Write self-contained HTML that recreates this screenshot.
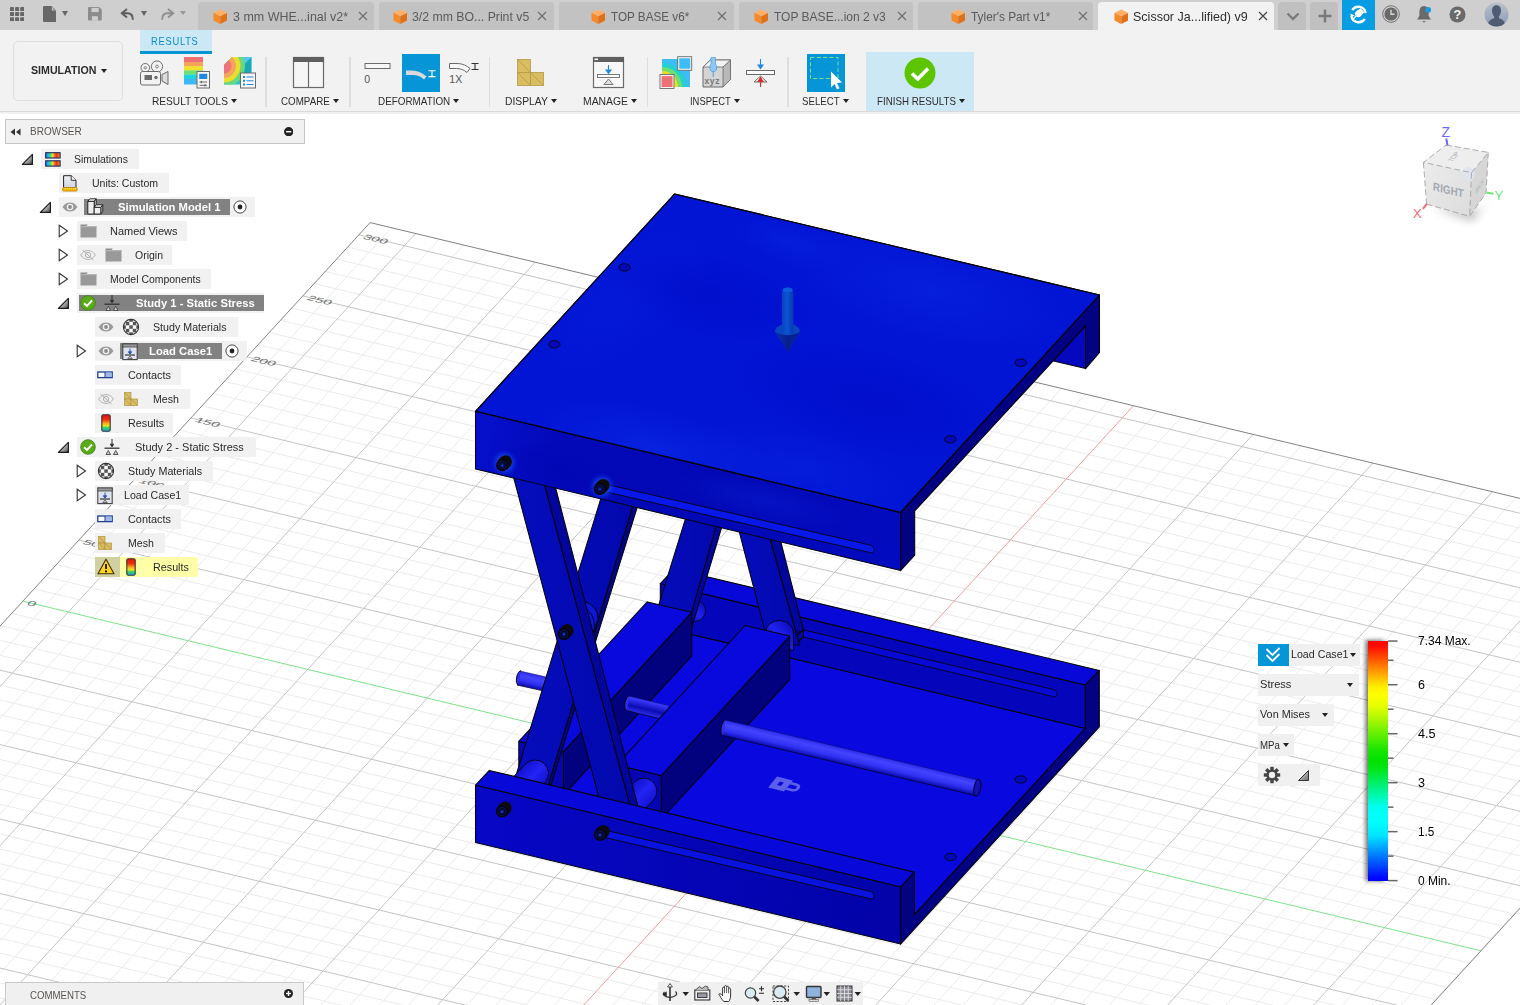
<!DOCTYPE html>
<html><head><meta charset="utf-8"><title>Simulation</title><style>
*{box-sizing:border-box}
html,body{margin:0;padding:0}
body{width:1520px;height:1005px;overflow:hidden;background:#fff;font-family:"Liberation Sans",sans-serif;position:relative}
.abs{position:absolute}
#tabbar{position:absolute;left:0;top:0;width:1520px;height:30px;background:#cfcfcf}
#toolbar{position:absolute;left:0;top:30px;width:1520px;height:81px;background:#f2f2f2}
.tab{position:absolute;top:2px;height:28px;border-radius:4px 4px 0 0}
.tabtxt{font-size:13px;white-space:nowrap;letter-spacing:-0.1px}
.arr{width:0;height:0;border-left:4px solid transparent;border-right:4px solid transparent;border-top:5px solid #444}
.tlab{text-align:center;font-size:11.5px;color:#2c2c2c;white-space:nowrap;letter-spacing:-0.1px}
.tarr{display:inline-block;width:0;height:0;border-left:3.5px solid transparent;border-right:3.5px solid transparent;border-top:4.5px solid #222;margin-left:4px;vertical-align:2px}
.rtxt{font-size:11.3px;color:#2a2a2a;white-space:nowrap;line-height:16px}
.rtxt.b{font-weight:bold;color:#fff}
.lg{background:#f0f0f0;font-size:11.3px;color:#2a2a2a;white-space:nowrap}
</style></head><body>
<div id="tabbar"></div><div id="toolbar"></div>
<div class="abs" style="left:0;top:111px;width:1520px;height:1px;background:#dadada"></div>
<div class="abs" style="left:0;top:112px;width:1520px;height:2px;background:#f0f0f0"></div>
<svg class="abs" style="left:0;top:113px" width="1520" height="892" viewBox="0 113 1520 892">
<path d="M347.7 247.0L1805.8 596.8M336.5 259.2L1794.6 609.0M325.3 271.4L1783.4 621.2M314.1 283.6L1772.2 633.4M291.7 308.1L1749.8 657.8M280.5 320.3L1738.6 670.0M269.3 332.5L1727.4 682.2M258.1 344.7L1716.2 694.4M235.7 369.1L1693.8 718.9M224.5 381.3L1682.6 731.1M213.3 393.5L1671.4 743.3M202.1 405.8L1660.2 755.5M179.7 430.2L1637.8 779.9M168.5 442.4L1626.6 792.1M157.3 454.6L1615.4 804.3M146.1 466.8L1604.2 816.5M123.7 491.2L1581.8 841.0M112.5 503.4L1570.6 853.2M101.3 515.6L1559.4 865.4M90.1 527.9L1548.2 877.6M67.7 552.3L1525.8 902.0M56.5 564.5L1514.6 914.2M45.3 576.7L1503.4 926.4M34.1 588.9L1492.2 938.6M11.7 613.3L1469.8 963.1M0.5 625.5L1458.6 975.3M-10.7 637.7L1447.4 987.5M-21.9 650.0L1436.2 999.7M-44.3 674.4L1413.8 1024.1M-55.5 686.6L1402.6 1036.3M-66.7 698.8L1391.4 1048.5M-77.9 711.0L1380.2 1060.7M-100.3 735.4L1357.8 1085.2M-111.5 747.6L1346.6 1097.4M-122.7 759.8L1335.4 1109.6M-133.9 772.1L1324.2 1121.8M-156.3 796.5L1301.8 1146.2M-167.5 808.7L1290.6 1158.4M-178.7 820.9L1279.4 1170.6M-189.9 833.1L1268.2 1182.8M-212.3 857.5L1245.8 1207.3M-223.5 869.7L1234.6 1219.5M-234.7 881.9L1223.4 1231.7M-245.9 894.2L1212.2 1243.9M-268.3 918.6L1189.8 1268.3M-279.5 930.8L1178.6 1280.5M-290.7 943.0L1167.4 1292.7M-301.9 955.2L1156.2 1304.9M-324.3 979.6L1133.8 1329.4M-335.5 991.8L1122.6 1341.6M-346.7 1004.0L1111.4 1353.8M-357.9 1016.3L1100.2 1366.0M-380.3 1040.7L1077.8 1390.4M-391.5 1052.9L1066.6 1402.6M-402.7 1065.1L1055.4 1414.8M-413.9 1077.3L1044.2 1427.0M-436.3 1101.7L1021.8 1451.5M-447.5 1113.9L1010.6 1463.7M-458.7 1126.1L999.4 1475.9M-469.9 1138.4L988.2 1488.1M-492.3 1162.8L965.8 1512.5M-503.5 1175.0L954.6 1524.7M-514.7 1187.2L943.4 1536.9M-525.9 1199.4L932.2 1549.1M-548.3 1223.8L909.8 1573.6M-559.5 1236.0L898.6 1585.8M-570.7 1248.2L887.4 1598.0M-581.9 1260.5L876.2 1610.2M-604.3 1284.9L853.8 1634.6M-615.5 1297.1L842.6 1646.8M-626.7 1309.3L831.4 1659.0M391.6 227.8L-616.4 1326.7M439.5 239.2L-568.5 1338.1M463.4 245.0L-544.6 1343.9M487.4 250.7L-520.6 1349.6M511.3 256.5L-496.7 1355.4M559.1 267.9L-448.9 1366.8M583.1 273.7L-424.9 1372.6M607.0 279.4L-401.0 1378.3M630.9 285.2L-377.1 1384.1M678.8 296.6L-329.2 1395.5M702.7 302.4L-305.3 1401.3M726.7 308.1L-281.3 1407.0M750.6 313.9L-257.4 1412.8M798.4 325.3L-209.6 1424.2M822.4 331.1L-185.6 1430.0M846.3 336.8L-161.7 1435.7M870.2 342.6L-137.8 1441.5M918.1 354.0L-89.9 1452.9M942.0 359.8L-66.0 1458.7M966.0 365.5L-42.0 1464.4M989.9 371.3L-18.1 1470.2M1037.7 382.7L29.7 1481.6M1061.7 388.5L53.7 1487.4M1085.6 394.2L77.6 1493.1M1109.5 400.0L101.5 1498.9M1157.4 411.4L149.4 1510.3M1181.3 417.2L173.3 1516.1M1205.3 422.9L197.3 1521.8M1229.2 428.7L221.2 1527.6M1277.0 440.1L269.0 1539.0M1301.0 445.9L293.0 1544.8M1324.9 451.6L316.9 1550.5M1348.8 457.4L340.8 1556.3M1396.7 468.8L388.7 1567.7M1420.6 474.6L412.6 1573.5M1444.6 480.3L436.6 1579.2M1468.5 486.1L460.5 1585.0M1516.3 497.5L508.3 1596.4M1540.3 503.3L532.3 1602.2M1564.2 509.0L556.2 1607.9M1588.1 514.8L580.1 1613.7M1636.0 526.2L628.0 1625.1M1659.9 532.0L651.9 1630.9M1683.9 537.7L675.9 1636.6M1707.8 543.5L699.8 1642.4M1755.6 554.9L747.6 1653.8M1779.6 560.7L771.6 1659.6M1803.5 566.4L795.5 1665.3M1827.4 572.2L819.4 1671.1" stroke="#ebebeb" stroke-width="1" fill="none"/>
<path d="M358.9 234.8L1817.0 584.5M302.9 295.9L1761.0 645.6M246.9 356.9L1705.0 706.6M190.9 418.0L1649.0 767.7M134.9 479.0L1593.0 828.7M78.9 540.1L1537.0 889.8M-33.1 662.2L1425.0 1011.9M-89.1 723.2L1369.0 1072.9M-145.1 784.3L1313.0 1134.0M-201.1 845.3L1257.0 1195.0M-257.1 906.4L1201.0 1256.1M-313.1 967.4L1145.0 1317.1M-369.1 1028.5L1089.0 1378.2M-425.1 1089.5L1033.0 1439.2M-481.1 1150.6L977.0 1500.3M-537.1 1211.6L921.0 1561.3M-593.1 1272.7L865.0 1622.4M415.6 233.5L-592.4 1332.4M535.2 262.2L-472.8 1361.1M654.9 290.9L-353.1 1389.8M774.5 319.6L-233.5 1418.5M894.2 348.3L-113.8 1447.2M1013.8 377.0L5.8 1475.9M1253.1 434.4L245.1 1533.3M1372.8 463.1L364.8 1562.0M1492.4 491.8L484.4 1590.7M1612.1 520.5L604.1 1619.4M1731.7 549.2L723.7 1648.1" stroke="#c4c4c4" stroke-width="1" fill="none"/>
<path d="M1828.2 572.3L820.2 1671.2" stroke="#828282" stroke-width="1" fill="none"/>
<path d="M-637.9 1321.5L370.1 222.6L1828.2 572.3" stroke="#828282" stroke-width="1" fill="none"/>
<path d="M22.9 601.1L1481.0 950.8" stroke="#7fe08a" stroke-width="1" fill="none"/>
<path d="M1133.5 405.7L125.5 1504.6" stroke="#f29a9a" stroke-width="1" fill="none"/>
<text transform="matrix(1.361,0.326,-0.540,0.592,361.9,238.4)" x="0" y="0" font-family="Liberation Sans, sans-serif" font-size="10.5" fill="#707070">300</text>
<text transform="matrix(1.361,0.326,-0.540,0.592,305.9,299.5)" x="0" y="0" font-family="Liberation Sans, sans-serif" font-size="10.5" fill="#707070">250</text>
<text transform="matrix(1.361,0.326,-0.540,0.592,249.9,360.5)" x="0" y="0" font-family="Liberation Sans, sans-serif" font-size="10.5" fill="#707070">200</text>
<text transform="matrix(1.361,0.326,-0.540,0.592,193.9,421.6)" x="0" y="0" font-family="Liberation Sans, sans-serif" font-size="10.5" fill="#707070">150</text>
<text transform="matrix(1.361,0.326,-0.540,0.592,137.9,482.6)" x="0" y="0" font-family="Liberation Sans, sans-serif" font-size="10.5" fill="#707070">100</text>
<text transform="matrix(1.361,0.326,-0.540,0.592,81.9,543.7)" x="0" y="0" font-family="Liberation Sans, sans-serif" font-size="10.5" fill="#707070">50</text>
<text transform="matrix(1.361,0.326,-0.540,0.592,25.9,604.7)" x="0" y="0" font-family="Liberation Sans, sans-serif" font-size="10.5" fill="#707070">0</text>
<defs>
<radialGradient id="glow"><stop offset="0.45" stop-color="#1a5cf8" stop-opacity="0.7"/><stop offset="1" stop-color="#0a30e0" stop-opacity="0"/></radialGradient>
<radialGradient id="hl1" cx="0.5" cy="0.5" r="0.5"><stop offset="0" stop-color="#0a2ae6" stop-opacity="0.9"/><stop offset="1" stop-color="#0a2ae6" stop-opacity="0"/></radialGradient>
<radialGradient id="dk1" cx="0.5" cy="0.5" r="0.5"><stop offset="0" stop-color="#0006b4" stop-opacity="0.75"/><stop offset="1" stop-color="#0006b4" stop-opacity="0"/></radialGradient>
<linearGradient id="rodg" x1="0" y1="0" x2="0.235" y2="-1" gradientUnits="objectBoundingBox"><stop offset="0" stop-color="#0a0ab8"/><stop offset="0.5" stop-color="#3838ff"/><stop offset="1" stop-color="#1414d8"/></linearGradient>
<linearGradient id="arrg" x1="0" y1="0" x2="1" y2="0"><stop offset="0" stop-color="#0743c0"/><stop offset="0.45" stop-color="#0b55d2"/><stop offset="1" stop-color="#0638b0"/></linearGradient>
<linearGradient id="coneg" x1="0" y1="0" x2="1" y2="0"><stop offset="0" stop-color="#0935ae"/><stop offset="0.5" stop-color="#061f8e"/><stop offset="1" stop-color="#072698"/></linearGradient>
<linearGradient id="legA" x1="0" y1="0" x2="1" y2="0"><stop offset="0" stop-color="#050dbe"/><stop offset="1" stop-color="#0308ac"/></linearGradient>
<radialGradient id="dk2" cx="0.5" cy="0.5" r="0.5"><stop offset="0" stop-color="#0008c0" stop-opacity="0.8"/><stop offset="1" stop-color="#0008c0" stop-opacity="0"/></radialGradient>
<linearGradient id="tfront" gradientUnits="userSpaceOnUse" x1="475" y1="440" x2="900" y2="541"><stop offset="0" stop-color="#0610cc"/><stop offset="0.2" stop-color="#0309b8"/><stop offset="0.6" stop-color="#0208b4"/><stop offset="1" stop-color="#030bc0"/></linearGradient>
<linearGradient id="bfront" gradientUnits="userSpaceOnUse" x1="475" y1="815" x2="900" y2="916"><stop offset="0" stop-color="#0707c6"/><stop offset="0.45" stop-color="#0505b8"/><stop offset="1" stop-color="#0303a8"/></linearGradient>
<clipPath id="frontclip"><polygon points="475.5,411.3 900.6,512.4 900.6,570.6 475.5,468.9"/></clipPath>
<clipPath id="topclip"><polygon points="475.5,411.3 674.7,193.9 1099.5,295 900.6,512.4"/></clipPath>
</defs>
<polygon points="521.9,778.2 914.3,872.2 914.3,914.9 1085.4,728.4 660.3,626.9" fill="#0909df" stroke="#04040c" stroke-width="1.05" stroke-linejoin="round"/>
<polygon points="660.3,583.6 1085.4,685.1 1085.4,728.4 660.3,626.9" fill="#0506bc" stroke="#04040c" stroke-width="1.05" stroke-linejoin="round"/>
<polygon points="674.2,568.9 1099.3,670.4 1085.4,685.1 660.3,583.6" fill="#0808d8" stroke="#04040c" stroke-width="1.05" stroke-linejoin="round"/>
<path d="M800.0 629.0L1052.5 689.3Q1057.7 690.6 1057.1 694.6Q1056.3 698.1 1051.5 696.2L800.0 636.2Z" fill="#0909d6" stroke="#04040c" stroke-width="0.9"/>
<g id="interior"></g>
<defs>
<linearGradient id="rodg2" gradientUnits="userSpaceOnUse" x1="0" y1="0" x2="3.4" y2="-14.5" gradientTransform="translate(0,7)" spreadMethod="reflect"><stop offset="0" stop-color="#0c0cb4"/><stop offset="0.55" stop-color="#3c3cff"/><stop offset="1" stop-color="#1a1ae0"/></linearGradient>
<linearGradient id="ping2" x1="0" y1="0" x2="1" y2="1"><stop offset="0.15" stop-color="#0a0ac4"/><stop offset="0.5" stop-color="#2424f4"/><stop offset="0.85" stop-color="#0c0cc8"/></linearGradient>
<linearGradient id="ping" x1="0.9" y1="0.1" x2="0.1" y2="0.9"><stop offset="0" stop-color="#0a0ac0"/><stop offset="0.5" stop-color="#2222f0"/><stop offset="1" stop-color="#0808b8"/></linearGradient>
</defs>
<ellipse cx="1020.7" cy="779.5" rx="5.8" ry="3.7" fill="#0308b8" stroke="#04040c" stroke-width="0.9"/>
<ellipse cx="950.5" cy="857" rx="5.8" ry="3.7" fill="#0308b8" stroke="#04040c" stroke-width="0.9"/>
<circle cx="694.5" cy="610.5" r="11" fill="url(#ping)" stroke="#04040c" stroke-width="0.9"/>
<polygon points="723.6,500.0 729.8,500.0 688.0,640.0 683.7,640.0" fill="#02069c" stroke="#04040c" stroke-width="1.05" stroke-linejoin="round"/>
<polygon points="691.3,500.0 723.6,500.0 683.7,640.0 647.9,640.0" fill="url(#legA)" stroke="#04040c" stroke-width="1.05" stroke-linejoin="round"/>
<polygon points="759.4,500.0 770.2,500.0 803.8,632.0 795.8,632.0" fill="#02069c" stroke="#04040c" stroke-width="1.05" stroke-linejoin="round"/>
<polygon points="796.8,635.4 803.2,629.8 803.6,637.0 798.5,641.5" fill="#02069c" stroke="#04040c" stroke-width="1.05" stroke-linejoin="round"/>
<polygon points="731.1,500.0 759.4,500.0 799.4,645.0 768.5,645.0" fill="url(#legA)" stroke="#04040c" stroke-width="1.05" stroke-linejoin="round"/>
<path d="M765.5 632 A14 12.5 0 0 1 793.5 634 L793.5 650 L765.5 650Z" fill="url(#ping)" stroke="#04040c" stroke-width="0.9"/>
<defs><linearGradient id="rodg1" gradientUnits="userSpaceOnUse" x1="553.6" y1="678.8" x2="550.4" y2="692.4"><stop offset="0" stop-color="#2a2aec"/><stop offset="0.3" stop-color="#4444ff"/><stop offset="0.68" stop-color="#3030f2"/><stop offset="1" stop-color="#0b0bae"/></linearGradient></defs><polygon points="553.0,678.6 520.0,671.0 517.0,685.0 551.0,692.6" fill="url(#rodg1)"/><polyline points="553.0,678.6 520.0,671.0" fill="none" stroke="#0a0a60" stroke-width="0.5"/><polyline points="551.0,692.6 517.0,685.0" fill="none" stroke="#050530" stroke-width="0.8"/>
<path d="M521.1 670.8 A3.2 7.2 10 0 0 518.5 685.2" fill="#2e2ef0" stroke="#04040c" stroke-width="1"/>
<polygon points="691.8,612.3 563.4,751.7 563.4,795.2 691.8,655.8" fill="#02027e" stroke="#04040c" stroke-width="1.05" stroke-linejoin="round"/>
<polygon points="518.8,741.3 563.4,751.7 563.4,795.2 518.8,784.8" fill="#0505b4" stroke="#04040c" stroke-width="1.05" stroke-linejoin="round"/>
<polygon points="647.2,601.9 691.8,612.3 563.4,751.7 518.8,741.3" fill="#0909de" stroke="#04040c" stroke-width="1.05" stroke-linejoin="round"/>
<defs><linearGradient id="rodg2" gradientUnits="userSpaceOnUse" x1="629.2" y1="696.2" x2="625.8" y2="710.4"><stop offset="0" stop-color="#2a2aec"/><stop offset="0.3" stop-color="#4444ff"/><stop offset="0.68" stop-color="#3030f2"/><stop offset="1" stop-color="#0b0bae"/></linearGradient></defs><polygon points="628.5,696.0 668.5,705.6 665.5,720.1 626.5,710.5" fill="url(#rodg2)"/><polyline points="628.5,696.0 668.5,705.6" fill="none" stroke="#0a0a60" stroke-width="0.5"/><polyline points="626.5,710.5 665.5,720.1" fill="none" stroke="#050530" stroke-width="0.8"/>
<path d="M629.5 696.0 A3.2 7.4 10 0 0 626.9 710.8" fill="#2e2ef0" stroke="#04040c" stroke-width="1"/>
<polygon points="789.7,636.1 661.3,775.5 661.3,819.0 789.7,679.6" fill="#02027e" stroke="#04040c" stroke-width="1.05" stroke-linejoin="round"/>
<polygon points="616.7,764.9 661.3,775.5 661.3,819.0 616.7,808.4" fill="#0505b4" stroke="#04040c" stroke-width="1.05" stroke-linejoin="round"/>
<polygon points="745.1,625.5 789.7,636.1 661.3,775.5 616.7,764.9" fill="#0909de" stroke="#04040c" stroke-width="1.05" stroke-linejoin="round"/>
<defs><linearGradient id="rodg3" gradientUnits="userSpaceOnUse" x1="725.6" y1="720.1" x2="722.0" y2="735.3"><stop offset="0" stop-color="#2a2aec"/><stop offset="0.3" stop-color="#4444ff"/><stop offset="0.68" stop-color="#3030f2"/><stop offset="1" stop-color="#0b0bae"/></linearGradient></defs><polygon points="724.8,719.9 978.3,780.0 975.3,795.6 722.8,735.5" fill="url(#rodg3)"/><polyline points="724.8,719.9 978.3,780.0" fill="none" stroke="#0a0a60" stroke-width="0.5"/><polyline points="722.8,735.5 975.3,795.6" fill="none" stroke="#050530" stroke-width="0.8"/><ellipse cx="977.3" cy="787.8" rx="3.3" ry="8.6" transform="rotate(10 977.3 787.8)" fill="#1212b4" stroke="#04040c" stroke-width="0.9"/>
<path d="M725.7 719.9 A3.2 7.9 10 0 0 723.1 735.7" fill="#2e2ef0" stroke="#04040c" stroke-width="1"/>
<g transform="matrix(0.88,0.217,-0.52,0.64,777,776.6)" fill="#9499f0" opacity="0.6"><path d="M0 0H18V17H0Z"/><path d="M18 2.5H24.5A6 6 0 0 1 24.5 14.5H18V11H24.5A2.5 2.5 0 0 0 24.5 6H18Z"/><rect x="6.5" y="5.5" width="4.5" height="5.5" fill="#0909df"/></g>
<path d="M635.2 781.2 A13.2 13.2 0 0 1 653.8 799.8 L639.8 814.8 L621.2 796.2Z" fill="url(#ping2)" stroke="#04040c" stroke-width="0.9"/>
<polygon points="640.6,480.0 645.7,480.0 546.4,800.0 543.7,800.0" fill="#020684" stroke="#04040c" stroke-width="1.05" stroke-linejoin="round"/>
<polygon points="606.5,480.0 640.6,480.0 543.7,800.0 508.5,800.0" fill="url(#legA)" stroke="#04040c" stroke-width="1.05" stroke-linejoin="round"/>
<path d="M525 764.4 A13.5 13.5 0 0 1 545 782.6 L531 797.6 L511 779.4Z" fill="url(#ping2)" stroke="#04040c" stroke-width="0.9"/>
<path d="M584.7 601.2 Q597.8 606 598.2 619 L592.5 633 L586 612Z" fill="#0a16dc" stroke="#04040c" stroke-width="1"/>
<path d="M587.1 609.5 Q594.5 615 594.3 626.8" fill="none" stroke="#04040c" stroke-width="0.9"/>
<polygon points="539.1,465.0 549.7,465.0 644.0,830.0 636.5,830.0" fill="#02069c" stroke="#04040c" stroke-width="1.05" stroke-linejoin="round"/>
<polygon points="510.3,465.0 539.1,465.0 636.5,830.0 607.6,830.0" fill="url(#legA)" stroke="#04040c" stroke-width="1.05" stroke-linejoin="round"/>
<path d="M559.3 629.6 A6.4 6.4 0 0 1 571.7 635.2 L568.4 638.7 Z" fill="#0b0b0d"/><circle cx="567.2" cy="630.5" r="6.4" fill="#0b0b0d"/><circle cx="563.9" cy="634.0" r="6.2" fill="#0a0a10"/><circle cx="563.9" cy="634.0" r="5.1" fill="#0a0f4e" stroke="#000" stroke-width="0.7"/><circle cx="563.9" cy="634.2" r="2.9" fill="#0c1670" stroke="#000" stroke-width="0.8"/><circle cx="563.9" cy="634.3" r="1" fill="#1838c8"/>
<polygon points="900.6,886.9 914.3,872.2 914.3,914.9 1085.4,728.4 1085.4,685.1 1099.3,670.4 1099.3,726.9 900.6,944.1" fill="#020282" stroke="#04040c" stroke-width="1.05" stroke-linejoin="round"/>
<polygon points="475.5,785.2 489.3,770.4 914.3,872.2 900.6,886.9" fill="#0808d8" stroke="#04040c" stroke-width="1.05" stroke-linejoin="round"/>
<polygon points="475.5,785.2 900.6,886.9 900.6,944.1 475.5,842.5" fill="url(#bfront)" stroke="#04040c" stroke-width="1.05" stroke-linejoin="round"/>
<path d="M603.0 829.7L869.5 891.2Q874.7 892.5 874.1 896.6Q873.3 900.2 868.5 898.3L603.0 837.1Z" fill="#0a12e0" stroke="#04040c" stroke-width="0.9"/>
<path d="M497.4 807.0 A6.4 6.4 0 0 1 509.8 812.6 L506.5 816.1 Z" fill="#0b0b0d"/><circle cx="505.3" cy="807.9" r="6.4" fill="#0b0b0d"/><circle cx="502.0" cy="811.4" r="6.2" fill="#0a0a10"/><circle cx="502.0" cy="811.4" r="5.1" fill="#0a0f4e" stroke="#000" stroke-width="0.7"/><circle cx="502.0" cy="811.6" r="2.9" fill="#0c1670" stroke="#000" stroke-width="0.8"/><circle cx="502.0" cy="811.7" r="1" fill="#1838c8"/>
<path d="M595.4 830.4 A6.4 6.4 0 0 1 607.8 836.0 L604.5 839.5 Z" fill="#0b0b0d"/><circle cx="603.3" cy="831.3" r="6.4" fill="#0b0b0d"/><circle cx="600.0" cy="834.8" r="6.2" fill="#0a0a10"/><circle cx="600.0" cy="834.8" r="5.1" fill="#0a0f4e" stroke="#000" stroke-width="0.7"/><circle cx="600.0" cy="835.0" r="2.9" fill="#0c1670" stroke="#000" stroke-width="0.8"/><circle cx="600.0" cy="835.1" r="1" fill="#1838c8"/>
<polygon points="1085.6,325.7 1085.6,368.6 1053.6,361.0" fill="#0608c0" stroke="#04040c" stroke-width="1.05" stroke-linejoin="round"/>
<polygon points="900.6,512.4 1099.5,295.0 1099.5,352.4 1085.6,368.6 1085.6,325.7 914.7,511.0 914.7,555.2 900.6,570.6" fill="#020282" stroke="#04040c" stroke-width="1.05" stroke-linejoin="round"/>
<polygon points="475.5,411.3 900.6,512.4 900.6,570.6 475.5,468.9" fill="url(#tfront)" stroke="#04040c" stroke-width="1.05" stroke-linejoin="round"/>
<g clip-path="url(#frontclip)"><ellipse cx="560" cy="470" rx="70" ry="28" fill="url(#dk1)" transform="rotate(13 560 470)"/><ellipse cx="760" cy="500" rx="90" ry="22" fill="url(#hl1)" opacity="0.35" transform="rotate(13 760 500)"/></g>
<path d="M603.0 483.6L869.5 544.9Q874.7 546.2 874.1 550.4Q873.3 554.1 868.5 552.2L603.0 491.2Z" fill="#0718e8" stroke="#04040c" stroke-width="0.9"/>
<circle cx="504.4" cy="463.0" r="13.6" fill="url(#glow)"/><path d="M497.7 460.8 A6.4 6.4 0 0 1 510.1 466.4 L506.8 469.9 Z" fill="#0b0b0d"/><circle cx="505.6" cy="461.7" r="6.4" fill="#0b0b0d"/><circle cx="502.3" cy="465.2" r="6.2" fill="#0a0a10"/><circle cx="502.3" cy="465.2" r="5.1" fill="#0a0f4e" stroke="#000" stroke-width="0.7"/><circle cx="502.3" cy="465.4" r="2.9" fill="#0c1670" stroke="#000" stroke-width="0.8"/><circle cx="502.3" cy="465.5" r="1" fill="#1838c8"/>
<circle cx="602.0" cy="486.7" r="13.6" fill="url(#glow)"/><path d="M595.3 484.5 A6.4 6.4 0 0 1 607.7 490.1 L604.4 493.6 Z" fill="#0b0b0d"/><circle cx="603.2" cy="485.4" r="6.4" fill="#0b0b0d"/><circle cx="599.9" cy="488.9" r="6.2" fill="#0a0a10"/><circle cx="599.9" cy="488.9" r="5.1" fill="#0a0f4e" stroke="#000" stroke-width="0.7"/><circle cx="599.9" cy="489.1" r="2.9" fill="#0c1670" stroke="#000" stroke-width="0.8"/><circle cx="599.9" cy="489.2" r="1" fill="#1838c8"/>
<polygon points="475.5,411.3 674.7,193.9 1099.5,295.0 900.6,512.4" fill="#0214d4" stroke="#04040c" stroke-width="1.05" stroke-linejoin="round"/>
<g clip-path="url(#topclip)">
<ellipse cx="930" cy="290" rx="150" ry="55" fill="url(#hl1)" opacity="0.55" transform="rotate(14 930 290)"/>
<ellipse cx="655" cy="448" rx="130" ry="42" fill="url(#hl1)" opacity="0.7" transform="rotate(14 655 448)"/>
<ellipse cx="800" cy="468" rx="120" ry="40" fill="url(#hl1)" opacity="0.45" transform="rotate(14 800 468)"/>
<ellipse cx="620" cy="300" rx="120" ry="60" fill="url(#hl1)" opacity="0.25" transform="rotate(-40 620 300)"/>
<ellipse cx="790" cy="242" rx="60" ry="24" fill="url(#hl1)" opacity="0.5" transform="rotate(14 790 242)"/>
<ellipse cx="870" cy="400" rx="140" ry="50" fill="url(#dk2)" opacity="0.55" transform="rotate(14 870 400)"/>
<ellipse cx="706" cy="295" rx="110" ry="40" fill="url(#dk2)" opacity="0.5" transform="rotate(14 706 295)"/>
</g>
<polygon points="475.5,411.3 674.7,193.9 1099.5,295.0 900.6,512.4" fill="none" stroke="#04040c" stroke-width="1.05" stroke-linejoin="round"/>
<ellipse cx="624.5" cy="267.4" rx="5.8" ry="3.7" fill="#0308b8" stroke="#04040c" stroke-width="0.9"/>
<ellipse cx="554.3" cy="344.3" rx="5.8" ry="3.7" fill="#0308b8" stroke="#04040c" stroke-width="0.9"/>
<ellipse cx="1020.7" cy="362.7" rx="5.8" ry="3.7" fill="#0308b8" stroke="#04040c" stroke-width="0.9"/>
<ellipse cx="950.3" cy="439.3" rx="5.8" ry="3.7" fill="#0308b8" stroke="#04040c" stroke-width="0.9"/>
<path d="M774.8 331.5 Q787.6 322 800 331.5 L788 352.3Z" fill="url(#coneg)"/>
<path d="M774.8 331.5 Q776 326.5 782 324.5 L793.4 324.5 Q799 326.5 800 331.5 Q787.6 339 774.8 331.5Z" fill="#0a46c0"/>
<path d="M782 333 V294 Q782 287.3 787.7 287.3 Q793.4 287.3 793.4 294 V333 Q787.7 336 782 333Z" fill="url(#arrg)"/>
<ellipse cx="787.7" cy="290" rx="5" ry="2.2" fill="#0e60e0" opacity="0.8"/>
</svg>
<div class="tab" style="left:198px;width:176px;background:#c2c2c2"></div>
<svg class="abs" style="left:212.8px;top:8.6px" width="14.6" height="15.5" viewBox="0 0 16 17"><polygon points="8,0.5 15.5,4.2 8,8 0.5,4.2" fill="#ffb066"/><polygon points="0.5,4.2 8,8 8,16.5 0.5,12.6" fill="#f58a2a"/><polygon points="15.5,4.2 8,8 8,16.5 15.5,12.6" fill="#e0701a"/></svg>
<div class="abs" style="left:232.70px;top:10.98px;font-size:12.9px;line-height:1;color:#5a5a5a;white-space:nowrap;transform-origin:0 0;transform:scaleX(0.9673);">3 mm WHE...inal v2*</div>
<svg class="abs" style="left:358px;top:11px" width="10" height="10" viewBox="0 0 10 10"><path d="M1 1L9 9M9 1L1 9" stroke="#707070" stroke-width="1.15" fill="none"/></svg>
<div class="tab" style="left:378.5px;width:175.0px;background:#c2c2c2"></div>
<svg class="abs" style="left:392.8px;top:8.6px" width="14.6" height="15.5" viewBox="0 0 16 17"><polygon points="8,0.5 15.5,4.2 8,8 0.5,4.2" fill="#ffb066"/><polygon points="0.5,4.2 8,8 8,16.5 0.5,12.6" fill="#f58a2a"/><polygon points="15.5,4.2 8,8 8,16.5 15.5,12.6" fill="#e0701a"/></svg>
<div class="abs" style="left:411.50px;top:10.98px;font-size:12.9px;line-height:1;color:#5a5a5a;white-space:nowrap;transform-origin:0 0;transform:scaleX(0.9513);">3/2 mm BO... Print v5</div>
<svg class="abs" style="left:537px;top:11px" width="10" height="10" viewBox="0 0 10 10"><path d="M1 1L9 9M9 1L1 9" stroke="#707070" stroke-width="1.15" fill="none"/></svg>
<div class="tab" style="left:558.5px;width:175.0px;background:#c2c2c2"></div>
<svg class="abs" style="left:590.8px;top:8.6px" width="14.6" height="15.5" viewBox="0 0 16 17"><polygon points="8,0.5 15.5,4.2 8,8 0.5,4.2" fill="#ffb066"/><polygon points="0.5,4.2 8,8 8,16.5 0.5,12.6" fill="#f58a2a"/><polygon points="15.5,4.2 8,8 8,16.5 15.5,12.6" fill="#e0701a"/></svg>
<div class="abs" style="left:610.50px;top:10.98px;font-size:12.9px;line-height:1;color:#5a5a5a;white-space:nowrap;transform-origin:0 0;transform:scaleX(0.9075);">TOP BASE v6*</div>
<svg class="abs" style="left:717px;top:11px" width="10" height="10" viewBox="0 0 10 10"><path d="M1 1L9 9M9 1L1 9" stroke="#707070" stroke-width="1.15" fill="none"/></svg>
<div class="tab" style="left:738.5px;width:174.5px;background:#c2c2c2"></div>
<svg class="abs" style="left:753.8px;top:8.6px" width="14.6" height="15.5" viewBox="0 0 16 17"><polygon points="8,0.5 15.5,4.2 8,8 0.5,4.2" fill="#ffb066"/><polygon points="0.5,4.2 8,8 8,16.5 0.5,12.6" fill="#f58a2a"/><polygon points="15.5,4.2 8,8 8,16.5 15.5,12.6" fill="#e0701a"/></svg>
<div class="abs" style="left:773.50px;top:10.98px;font-size:12.9px;line-height:1;color:#5a5a5a;white-space:nowrap;transform-origin:0 0;transform:scaleX(0.9318);">TOP BASE...ion 2 v3</div>
<svg class="abs" style="left:897px;top:11px" width="10" height="10" viewBox="0 0 10 10"><path d="M1 1L9 9M9 1L1 9" stroke="#707070" stroke-width="1.15" fill="none"/></svg>
<div class="tab" style="left:918px;width:175px;background:#c2c2c2"></div>
<svg class="abs" style="left:950.8px;top:8.6px" width="14.6" height="15.5" viewBox="0 0 16 17"><polygon points="8,0.5 15.5,4.2 8,8 0.5,4.2" fill="#ffb066"/><polygon points="0.5,4.2 8,8 8,16.5 0.5,12.6" fill="#f58a2a"/><polygon points="15.5,4.2 8,8 8,16.5 15.5,12.6" fill="#e0701a"/></svg>
<div class="abs" style="left:970.50px;top:10.98px;font-size:12.9px;line-height:1;color:#5a5a5a;white-space:nowrap;transform-origin:0 0;transform:scaleX(0.9185);">Tyler's Part v1*</div>
<svg class="abs" style="left:1078px;top:11px" width="10" height="10" viewBox="0 0 10 10"><path d="M1 1L9 9M9 1L1 9" stroke="#707070" stroke-width="1.15" fill="none"/></svg>
<div class="tab" style="left:1098px;width:175.5px;background:#f2f2f2"></div>
<svg class="abs" style="left:1113.8px;top:8.6px" width="14.6" height="15.5" viewBox="0 0 16 17"><polygon points="8,0.5 15.5,4.2 8,8 0.5,4.2" fill="#ffb066"/><polygon points="0.5,4.2 8,8 8,16.5 0.5,12.6" fill="#f58a2a"/><polygon points="15.5,4.2 8,8 8,16.5 15.5,12.6" fill="#e0701a"/></svg>
<div class="abs" style="left:1133.00px;top:10.98px;font-size:12.9px;line-height:1;color:#2e2e2e;white-space:nowrap;transform-origin:0 0;transform:scaleX(0.9705);">Scissor Ja...lified) v9</div>
<svg class="abs" style="left:1258px;top:11px" width="10" height="10" viewBox="0 0 10 10"><path d="M1 1L9 9M9 1L1 9" stroke="#444" stroke-width="1.15" fill="none"/></svg>
<svg class="abs" style="left:10px;top:7px" width="14.2" height="14.2" viewBox="0 0 14.2 14.2"><rect x="0.0" y="0.0" width="4" height="4" rx="0.5" fill="#666"/><rect x="0.0" y="5.1" width="4" height="4" rx="0.5" fill="#666"/><rect x="0.0" y="10.2" width="4" height="4" rx="0.5" fill="#666"/><rect x="5.1" y="0.0" width="4" height="4" rx="0.5" fill="#666"/><rect x="5.1" y="5.1" width="4" height="4" rx="0.5" fill="#666"/><rect x="5.1" y="10.2" width="4" height="4" rx="0.5" fill="#666"/><rect x="10.2" y="0.0" width="4" height="4" rx="0.5" fill="#666"/><rect x="10.2" y="5.1" width="4" height="4" rx="0.5" fill="#666"/><rect x="10.2" y="10.2" width="4" height="4" rx="0.5" fill="#666"/></svg>
<svg class="abs" style="left:43px;top:5.8px" width="13.4" height="16" viewBox="0 0 13.4 16"><path d="M1 0H8.6L13.4 4.8V15A1 1 0 0 1 12.4 16H1A1 1 0 0 1 0 15V1A1 1 0 0 1 1 0Z" fill="#676767"/><path d="M8.9 0.3V4.5H13.1Z" fill="#d2d2d2"/><path d="M8.9 0.3L13.1 4.5H10.4Z" fill="#676767" opacity="0.55"/></svg>
<div class="abs arr" style="left:61.8px;top:11.2px;border-top-color:#666;border-left-width:3.8px;border-right-width:3.8px;border-top-width:5px"></div>
<svg class="abs" style="left:88.2px;top:7.2px" width="13.8" height="13.6" viewBox="0 0 13.8 13.6"><path d="M1 0H11L13.8 2.6V12.6A1 1 0 0 1 12.8 13.6H1A1 1 0 0 1 0 12.6V1A1 1 0 0 1 1 0Z" fill="#8c8c8c"/><rect x="3.5" y="0.9" width="7.2" height="4.4" fill="#cfcfcf"/><rect x="3.5" y="3.8" width="7.2" height="1.5" fill="#8c8c8c" opacity="0"/><rect x="3.9" y="9.2" width="6" height="4.4" fill="#cfcfcf"/><rect x="3" y="5.3" width="8" height="1.2" fill="#8c8c8c"/></svg>
<svg class="abs" style="left:119px;top:7px" width="16" height="15" viewBox="0 0 16 15"><path d="M8 2L2.8 6.2L8 10.6" stroke="#5c5c5c" stroke-width="1.9" fill="none" stroke-linejoin="miter"/><path d="M3.5 6.3H8.5C12 6.3 13.9 8.8 13.9 12.8" stroke="#5c5c5c" stroke-width="1.9" fill="none"/></svg>
<div class="abs arr" style="left:141px;top:11.2px;border-top-color:#666;border-left-width:3.8px;border-right-width:3.8px;border-top-width:5px"></div>
<svg class="abs" style="left:160px;top:7px" width="16" height="15" viewBox="0 0 16 15"><g transform="translate(16,0) scale(-1,1)"><path d="M8 2L2.8 6.2L8 10.6" stroke="#909090" stroke-width="1.9" fill="none"/><path d="M3.5 6.3H8.5C12 6.3 13.9 8.8 13.9 12.8" stroke="#909090" stroke-width="1.9" fill="none"/></g></svg>
<div class="abs arr" style="left:180.2px;top:11.2px;border-top-color:#9a9a9a;border-left-width:3.4px;border-right-width:3.4px;border-top-width:4.6px"></div>
<div class="abs" style="left:1278px;top:2px;width:28px;height:28px;background:#c0c0c0;border-radius:4px 4px 0 0"></div>
<svg class="abs" style="left:1285.5px;top:12px" width="14" height="9" viewBox="0 0 14 9"><path d="M1.5 1.5L7 7L12.5 1.5" stroke="#7a7a7a" stroke-width="2.3" fill="none"/></svg>
<div class="abs" style="left:1310px;top:2px;width:28px;height:28px;background:#c0c0c0;border-radius:4px 4px 0 0"></div>
<svg class="abs" style="left:1317.5px;top:8.5px" width="14" height="14" viewBox="0 0 14 14"><path d="M7 0.5V13.5M0.5 7H13.5" stroke="#7a7a7a" stroke-width="2.5" fill="none"/></svg>
<div class="abs" style="left:1342px;top:0;width:33px;height:30px;background:#089ce2"></div>
<svg class="abs" style="left:1348px;top:4px" width="21" height="21" viewBox="0 0 21 21"><path d="M4.2 6.2A7.3 7.3 0 0 1 17.6 9.2M16.8 14.8A7.3 7.3 0 0 1 3.4 11.8" stroke="#fff" stroke-width="2.3" fill="none"/><path d="M12.5 4.2L16.2 7.9L12.8 12.2C11.5 13.6 9.8 13.6 8.6 12.6L6 15.2L5 14.2L7.6 11.6C6.6 10.4 6.8 8.7 8 7.5Z" fill="#fff"/><path d="M2 9.8L3.6 13.2L6.6 11.2Z" fill="#fff"/></svg>
<svg class="abs" style="left:1382px;top:5px" width="18" height="18" viewBox="0 0 18 18"><circle cx="9" cy="9" r="8.3" fill="none" stroke="#6a6a6a" stroke-width="0.9"/><circle cx="9" cy="9" r="6.6" fill="#6a6a6a"/><path d="M9 4.8V9.3H12.6" stroke="#d4d4d4" stroke-width="1.4" fill="none"/></svg>
<svg class="abs" style="left:1415px;top:4px" width="18" height="20" viewBox="0 0 18 20"><path d="M9 2C5.8 2 4.4 4.8 4.4 8V12L2 15.5H16L13.6 12V8C13.6 4.8 12.2 2 9 2Z" fill="#6a6a6a"/><path d="M7.2 17H10.8L9 18.6Z" fill="#6a6a6a"/><circle cx="13.2" cy="5.8" r="2.9" fill="#1a9be0"/></svg>
<svg class="abs" style="left:1448.5px;top:5.5px" width="17" height="17" viewBox="0 0 18 18"><circle cx="9" cy="9" r="8.5" fill="#6a6a6a"/><text x="9" y="13.7" text-anchor="middle" font-family="Liberation Sans, sans-serif" font-weight="bold" font-size="13.5" fill="#f4f4f4">?</text></svg>
<svg class="abs" style="left:1484px;top:2px" width="25" height="25" viewBox="0 0 25 25"><defs><clipPath id="avc"><circle cx="12.5" cy="12.5" r="12"/></clipPath><linearGradient id="avg" x1="0" y1="0" x2="0" y2="1"><stop offset="0" stop-color="#b8c0cc"/><stop offset="1" stop-color="#8b9cb6"/></linearGradient></defs><circle cx="12.5" cy="12.5" r="12" fill="url(#avg)"/><g clip-path="url(#avc)"><path d="M12.5 3.2C9.4 3.2 8 5.6 8 8.6C8 11.2 9 13.4 10.2 14.6L10 16.4C6.5 17.2 4 18.8 3.4 25H21.6C21 18.8 18.5 17.2 15 16.4L14.8 14.6C16 13.4 17 11.2 17 8.6C17 5.6 15.6 3.2 12.5 3.2Z" fill="#4f5c72"/></g></svg>
<div class="abs" style="left:13px;top:40.5px;width:109.5px;height:60.5px;border:1.5px solid #dedede;border-radius:5px;background:#f2f2f2"></div>
<div class="abs" style="left:30.60px;top:65.46px;font-size:10.8px;line-height:1;font-weight:bold;color:#2c2c2c;white-space:nowrap;transform-origin:0 0;transform:scaleX(0.9850);">SIMULATION</div>
<div class="abs tarr" style="left:100.6px;top:68.8px;margin:0"></div>
<div class="abs" style="left:139.5px;top:30px;width:72px;height:20.5px;background:#cde8f5"></div>
<div class="abs" style="left:139.5px;top:50.5px;width:72px;height:3px;background:#0696d7"></div>
<div class="abs" style="left:151.40px;top:36.46px;font-size:10.8px;line-height:1;color:#0a8ccb;white-space:nowrap;transform-origin:0 0;transform:scaleX(0.8601);letter-spacing:0.9px;">RESULTS</div>
<div class="abs" style="left:265.25px;top:57px;width:1.5px;height:50px;background:#dedede"></div>
<div class="abs" style="left:349.25px;top:57px;width:1.5px;height:50px;background:#dedede"></div>
<div class="abs" style="left:488.75px;top:57px;width:1.5px;height:50px;background:#dedede"></div>
<div class="abs" style="left:646.75px;top:57px;width:1.5px;height:50px;background:#dedede"></div>
<div class="abs" style="left:787.25px;top:57px;width:1.5px;height:50px;background:#dedede"></div>
<div class="abs" style="left:151.90px;top:96.24px;font-size:10.7px;line-height:1;color:#2c2c2c;white-space:nowrap;transform-origin:0 0;transform:scaleX(0.9490);">RESULT TOOLS</div><div class="abs tarr" style="left:231.2px;top:99.3px;margin:0"></div>
<div class="abs" style="left:281.00px;top:96.24px;font-size:10.7px;line-height:1;color:#2c2c2c;white-space:nowrap;transform-origin:0 0;transform:scaleX(0.9155);">COMPARE</div><div class="abs tarr" style="left:333.1px;top:99.3px;margin:0"></div>
<div class="abs" style="left:377.60px;top:96.24px;font-size:10.7px;line-height:1;color:#2c2c2c;white-space:nowrap;transform-origin:0 0;transform:scaleX(0.9238);">DEFORMATION</div><div class="abs tarr" style="left:453.2px;top:99.3px;margin:0"></div>
<div class="abs" style="left:504.50px;top:96.24px;font-size:10.7px;line-height:1;color:#2c2c2c;white-space:nowrap;transform-origin:0 0;transform:scaleX(0.9639);">DISPLAY</div><div class="abs tarr" style="left:550.6px;top:99.3px;margin:0"></div>
<div class="abs" style="left:582.80px;top:96.24px;font-size:10.7px;line-height:1;color:#2c2c2c;white-space:nowrap;transform-origin:0 0;transform:scaleX(0.9725);">MANAGE</div><div class="abs tarr" style="left:631.2px;top:99.3px;margin:0"></div>
<div class="abs" style="left:689.70px;top:96.24px;font-size:10.7px;line-height:1;color:#2c2c2c;white-space:nowrap;transform-origin:0 0;transform:scaleX(0.8820);">INSPECT</div><div class="abs tarr" style="left:733.9px;top:99.3px;margin:0"></div>
<div class="abs" style="left:802.20px;top:96.24px;font-size:10.7px;line-height:1;color:#2c2c2c;white-space:nowrap;transform-origin:0 0;transform:scaleX(0.9033);">SELECT</div><div class="abs tarr" style="left:843.1px;top:99.3px;margin:0"></div>
<div class="abs" style="left:866px;top:52px;width:108px;height:59px;background:#cde8f5"></div>
<div class="abs" style="left:876.90px;top:96.24px;font-size:10.7px;line-height:1;color:#2c2c2c;white-space:nowrap;transform-origin:0 0;transform:scaleX(0.9122);">FINISH RESULTS</div><div class="abs tarr" style="left:959.2px;top:99.3px;margin:0"></div>
<svg class="abs" style="left:138px;top:59.2px" width="32" height="30" viewBox="0 0 32 30">
<circle cx="7.3" cy="8.8" r="4.3" fill="#f2f2f2" stroke="#6b6b6b" stroke-width="1"/><circle cx="7.3" cy="8.8" r="1.2" fill="none" stroke="#6b6b6b" stroke-width="0.8"/>
<circle cx="19" cy="7.5" r="5.6" fill="#f2f2f2" stroke="#6b6b6b" stroke-width="1"/><circle cx="19" cy="7.5" r="1.4" fill="none" stroke="#6b6b6b" stroke-width="0.8"/>
<rect x="2.5" y="12.5" width="20" height="13.5" rx="2" fill="#f2f2f2" stroke="#6b6b6b" stroke-width="1"/>
<rect x="6.5" y="16" width="7.5" height="5" fill="#6b6b6b"/><circle cx="18" cy="18.5" r="1.7" fill="#6b6b6b"/>
<path d="M24 15.5L30 12.5V25.5L24 22Z" fill="#dcdcdc" stroke="#6b6b6b" stroke-width="1"/></svg>
<svg class="abs" style="left:183px;top:56px" width="28" height="34" viewBox="0 0 28 34">
<rect x="1" y="1" width="19" height="5.2" fill="#ee7075"/><rect x="1" y="6" width="19" height="4.4" fill="#f7a25a"/><rect x="1" y="10.2" width="19" height="4.4" fill="#efe22a"/><rect x="1" y="14.4" width="19" height="4.4" fill="#6fdf71"/><rect x="1" y="18.6" width="19" height="4.6" fill="#1fd3dc"/><rect x="1" y="23" width="19" height="5.5" fill="#3fb6f6"/>
<rect x="14" y="15.5" width="12.5" height="16.5" fill="#f6f6f6" stroke="#6b6b6b" stroke-width="1"/><rect x="16.2" y="17.8" width="8" height="5.2" fill="#1e88e5"/>
<path d="M16.5 26H24M16.5 29.3H24M18.3 24.8V27.2M22 28.1V30.5" stroke="#555" stroke-width="0.9"/></svg>
<svg class="abs" style="left:223px;top:56px" width="34" height="34" viewBox="0 0 34 34">
<defs><clipPath id="cc1"><path d="M1 9L9 1H28.5V20.5L20.5 28.5H1Z"/></clipPath></defs>
<g clip-path="url(#cc1)"><rect x="0" y="0" width="30" height="30" fill="#21c3cf"/><path d="M20.5 9L28.5 1V20.5L20.5 28.5Z" fill="#17a9b8"/><path d="M9 1H28.5L20.5 9Z" fill="#52c8f0"/>
<circle cx="1" cy="10" r="21" fill="#68d87a"/><circle cx="1" cy="10" r="16.5" fill="#e9e02d"/><circle cx="1" cy="10" r="12" fill="#f5a55f"/><circle cx="1" cy="10" r="7.5" fill="#ee7378"/></g>
<rect x="17.5" y="17" width="15" height="15" fill="#f6f6f6" stroke="#6b6b6b" stroke-width="1"/>
<path d="M23.5 21H30.5M23.5 24.8H30.5M23.5 28.5H30.5" stroke="#1e88e5" stroke-width="1"/><rect x="20" y="20" width="2" height="2" fill="#1e88e5"/><rect x="20" y="23.8" width="2" height="2" fill="#1e88e5"/><rect x="20" y="27.5" width="2" height="2" fill="#1e88e5"/></svg>
<svg class="abs" style="left:292px;top:56px" width="34" height="33" viewBox="0 0 34 33"><rect x="1.5" y="1.5" width="30" height="30" fill="#f6f6f6" stroke="#6b6b6b" stroke-width="1.2"/><rect x="1" y="1" width="31" height="5" fill="#5f5f5f"/><path d="M16.5 6V31" stroke="#6b6b6b" stroke-width="1.2"/></svg>
<svg class="abs" style="left:363px;top:60px" width="30" height="26" viewBox="0 0 30 26"><rect x="2" y="3.5" width="25" height="5" fill="#f8f8f8" stroke="#6b6b6b" stroke-width="1"/><text x="1.3" y="22.8" font-family="Liberation Sans, sans-serif" font-size="10.5" fill="#555">0</text></svg>
<div class="abs" style="left:402px;top:54px;width:38px;height:38px;background:#0696d7"></div>
<svg class="abs" style="left:402px;top:54px" width="38" height="38" viewBox="0 0 38 38"><path d="M4 16.5H10C15.5 16.5 20 18.5 24.5 22.5L22 25.5C18 22 15 21 10 21H4Z" fill="#d9d9d9"/><path d="M26.5 16.8H33.5M26.5 22.6H33.5M30 16.8V22.6" stroke="#fff" stroke-width="1.1" fill="none"/></svg>
<svg class="abs" style="left:447px;top:60px" width="36" height="26" viewBox="0 0 36 26"><path d="M2.5 3.5H10C15.5 3.5 19.5 5.5 23 8.5L20 12.5C17 10 14 8.5 9.5 8.5H2.5Z" fill="#f8f8f8" stroke="#6b6b6b" stroke-width="1"/><path d="M24.5 3.5H31.5M24.5 9.5H31.5M28 3.5V9.5" stroke="#333" stroke-width="1.1"/><text x="2.3" y="22.8" font-family="Liberation Sans, sans-serif" font-size="10.5" fill="#555">1X</text></svg>
<svg class="abs" style="left:516px;top:58px" width="30" height="30" viewBox="0 0 30 30"><g fill="#d9bd60" stroke="#b59a45" stroke-width="0.8"><rect x="1.5" y="1.5" width="13" height="13"/><rect x="1.5" y="14.5" width="13" height="13"/><rect x="14.5" y="14.5" width="13" height="13"/><path d="M1.5 1.5L14.5 14.5M1.5 14.5L14.5 27.5M14.5 14.5L27.5 27.5" fill="none"/></g></svg>
<svg class="abs" style="left:592px;top:56px" width="34" height="33" viewBox="0 0 34 33"><rect x="1.5" y="1.5" width="30" height="30" fill="#f8f8f8" stroke="#6b6b6b" stroke-width="1.2"/><rect x="1" y="1" width="31" height="5" fill="#5f5f5f"/><rect x="2.5" y="2.5" width="3.5" height="1.6" fill="#fff"/><rect x="5.5" y="18.5" width="22" height="3" fill="#fff" stroke="#6b6b6b" stroke-width="0.9"/><path d="M12 28.5L16.5 23L21 28.5Z" fill="#e0e0e0" stroke="#6b6b6b" stroke-width="0.9"/><path d="M16.5 9V16.5M14 14L16.5 17.3L19 14Z" stroke="#1e88e5" stroke-width="1.1" fill="#1e88e5"/></svg>
<svg class="abs" style="left:659px;top:56px" width="34" height="34" viewBox="0 0 34 34"><defs><clipPath id="ic1"><rect x="3" y="3" width="28" height="28"/></clipPath></defs><g clip-path="url(#ic1)"><rect x="3" y="3" width="28" height="28" fill="#3dbcf5"/><circle cx="3" cy="31" r="24" fill="#23d2cf"/><circle cx="3" cy="31" r="20" fill="#6fde72"/><circle cx="3" cy="31" r="16" fill="#e8df28"/><circle cx="3" cy="31" r="11.5" fill="#f5a35c"/></g><rect x="19.5" y="1.5" width="12.5" height="12" fill="#3dbcf5" stroke="#f4f4f4" stroke-width="1.6"/><rect x="18.7" y="0.7" width="14" height="13.6" fill="none" stroke="#6b6b6b" stroke-width="0.9"/><rect x="1.8" y="19.3" width="12.5" height="12.5" fill="#ee7075" stroke="#f4f4f4" stroke-width="1.6"/><rect x="1" y="18.5" width="14" height="14" fill="none" stroke="#6b6b6b" stroke-width="0.9"/><path d="M2.5 25.5A7 7 0 0 1 9.5 31L13.5 31L13.5 20L2.5 20Z" fill="#f5a35c" opacity="0"/></svg>
<svg class="abs" style="left:701px;top:56px" width="32" height="34" viewBox="0 0 32 34"><path d="M2 11L9.5 4H29.5V23.5L22 31H2Z" fill="#d4d4d4" stroke="#6b6b6b" stroke-width="1"/><path d="M22 11V31L29.5 23.5V4Z" fill="#b8b8b8" stroke="#6b6b6b" stroke-width="0.8"/><path d="M2 11H22L29.5 4H9.5Z" fill="#f2f2f2" stroke="#6b6b6b" stroke-width="0.8"/><path d="M10 1.5H14.5V8L15.5 9.5V14L13.5 15.5H11L9 14V9.5L10 8Z" fill="#8ec8f2" stroke="#4a9fe0" stroke-width="0.7"/><path d="M12.2 15.5V21" stroke="#4a9fe0" stroke-width="1"/><text x="3.5" y="27.5" font-family="Liberation Sans, sans-serif" font-weight="bold" font-size="8.5" fill="#777" letter-spacing="0.6">xyz</text></svg>
<svg class="abs" style="left:744px;top:56px" width="34" height="34" viewBox="0 0 34 34"><rect x="2.5" y="14.5" width="28" height="4" fill="#fff" stroke="#6b6b6b" stroke-width="1"/><path d="M16.5 3V11M14 9L16.5 12.5L19 9Z" stroke="#1e88e5" stroke-width="1.1" fill="#1e88e5"/><path d="M10 26L16.5 20L23 26Z" fill="#fff" stroke="#6b6b6b" stroke-width="1"/><path d="M16.5 31V24M14 25.5L16.5 21.5L19 25.5Z" stroke="#d92b2b" stroke-width="1.1" fill="#d92b2b"/></svg>
<div class="abs" style="left:807px;top:54px;width:38px;height:38px;background:#0696d7"></div>
<svg class="abs" style="left:807px;top:54px" width="38" height="38" viewBox="0 0 38 38"><rect x="3.5" y="3.5" width="27.5" height="21" fill="none" stroke="#7be08a" stroke-width="1" stroke-dasharray="4 2.3"/><path d="M24 17.5V33.5L27.5 30L30 35.5L32.5 34.3L30 29L35 28.5Z" fill="#fff"/></svg>
<svg class="abs" style="left:904px;top:57px" width="32" height="32" viewBox="0 0 32 32"><circle cx="16" cy="16" r="15.5" fill="#5dc400"/><path d="M8 16.5L13.8 22L24 11.5" stroke="#fff" stroke-width="3.6" fill="none"/></svg>
<div class="abs" style="left:5px;top:119px;width:300px;height:24.5px;background:#f1f1f1;border:1px solid #c6c6c6"></div>
<svg class="abs" style="left:10px;top:128px" width="11" height="8" viewBox="0 0 11 8"><path d="M5 0.5V7.5L0.5 4ZM10.5 0.5V7.5L6 4Z" fill="#333"/></svg>
<div class="abs" style="left:30.20px;top:126.34px;font-size:10.7px;line-height:1;color:#5a5550;white-space:nowrap;transform-origin:0 0;transform:scaleX(0.9369);">BROWSER</div>
<svg class="abs" style="left:283.8px;top:126.8px" width="9.4" height="9.4" viewBox="0 0 9 9"><circle cx="4.5" cy="4.5" r="4.5" fill="#222"/><rect x="2" y="3.8" width="5" height="1.4" fill="#fff"/></svg>
<div class="abs" style="left:41px;top:149.2px;width:98px;height:19.6px;background:rgba(240,240,240,0.93)"></div>
<svg class="abs" style="left:21.4px;top:152.6px" width="12.4" height="12.4" viewBox="0 0 12.4 12.4"><defs><linearGradient id="tg27159" x1="0.2" y1="0.2" x2="0.9" y2="0.9"><stop offset="0.3" stop-color="#d4d4d4"/><stop offset="1" stop-color="#5a5a5a"/></linearGradient></defs><path d="M11.4 1.4V11.4H1.4Z" fill="url(#tg27159)" stroke="#1c1c1c" stroke-width="1.2" stroke-linejoin="round"/></svg>
<svg class="abs" style="left:44.6px;top:151.6px" width="16" height="15" viewBox="0 0 16 15"><defs><linearGradient id="sg1" x1="0" y1="0" x2="1" y2="0"><stop offset="0" stop-color="#2a6cf8"/><stop offset="0.18" stop-color="#20b8f0"/><stop offset="0.34" stop-color="#40e070"/><stop offset="0.48" stop-color="#f0e020"/><stop offset="0.62" stop-color="#f87020"/><stop offset="0.74" stop-color="#f03030"/><stop offset="0.88" stop-color="#f86020"/><stop offset="1" stop-color="#f8a020"/></linearGradient></defs><rect x="0.7" y="0.7" width="14.4" height="5.3" fill="url(#sg1)" stroke="#1c2a5a" stroke-width="1.1"/><rect x="0.7" y="8.8" width="14.4" height="5.3" fill="url(#sg1)" stroke="#1c2a5a" stroke-width="1.1"/></svg>
<div class="abs" style="left:74.10px;top:154.17px;font-size:11.2px;line-height:1;color:#2a2a2a;white-space:nowrap;transform-origin:0 0;transform:scaleX(0.9310);">Simulations</div>
<div class="abs" style="left:59px;top:173.2px;width:110px;height:19.6px;background:rgba(240,240,240,0.93)"></div>
<svg class="abs" style="left:61.8px;top:174.6px" width="16" height="17" viewBox="0 0 16 17"><defs><linearGradient id="ug1" x1="0" y1="0" x2="0" y2="1"><stop offset="0" stop-color="#eef0f4"/><stop offset="1" stop-color="#cfd5de"/></linearGradient></defs><path d="M1.6 0.7H9.2L14 5.3V12.6H1.6Z" fill="url(#ug1)" stroke="#222" stroke-width="1"/><path d="M9.2 0.7V5.3H14" fill="#f8f8f8" stroke="#222" stroke-width="0.9"/><rect x="0.7" y="12.5" width="14.4" height="3.6" rx="0.8" fill="#f4b400" stroke="#c48400" stroke-width="0.8"/><path d="M3 12.8V14.3M5.2 12.8V14.3M7.4 12.8V14.3M9.6 12.8V14.3M11.8 12.8V14.3M13.6 12.8V14.3" stroke="#fbe7a0" stroke-width="0.8"/></svg>
<div class="abs" style="left:92.20px;top:178.17px;font-size:11.2px;line-height:1;color:#2a2a2a;white-space:nowrap;transform-origin:0 0;transform:scaleX(0.9413);">Units: Custom</div>
<div class="abs" style="left:59px;top:197.2px;width:196px;height:19.6px;background:rgba(240,240,240,0.93)"></div>
<svg class="abs" style="left:39.4px;top:200.6px" width="12.4" height="12.4" viewBox="0 0 12.4 12.4"><defs><linearGradient id="tg45207" x1="0.2" y1="0.2" x2="0.9" y2="0.9"><stop offset="0.3" stop-color="#d4d4d4"/><stop offset="1" stop-color="#5a5a5a"/></linearGradient></defs><path d="M11.4 1.4V11.4H1.4Z" fill="url(#tg45207)" stroke="#1c1c1c" stroke-width="1.2" stroke-linejoin="round"/></svg>
<svg class="abs" style="left:62px;top:202px" width="16" height="10" viewBox="0 0 16 10"><path d="M0.5 5C3 1.3 5.5 0.5 8 0.5S13 1.3 15.5 5C13 8.7 10.5 9.5 8 9.5S3 8.7 0.5 5Z" fill="#9a9a9a"/><circle cx="8" cy="5" r="3.2" fill="#f0f0f0"/><circle cx="8" cy="5" r="1.9" fill="#8a8a8a"/></svg>
<div class="abs" style="left:84px;top:199.2px;width:146px;height:15.6px;background:#828282"></div>
<svg class="abs" style="left:86.8px;top:198.2px" width="17" height="17" viewBox="0 0 17 17"><g stroke="#1c1c1c" stroke-width="0.9" stroke-linejoin="round"><path d="M0.8 3.4L2.8 0.8H9.2L7.2 3.4Z" fill="#f4f4f4"/><path d="M7.2 3.4L9.2 0.8V8H7.2Z" fill="#d0d0d0"/><path d="M0.8 3.4H7.2V16H0.8Z" fill="#ececee"/><path d="M7.2 9.4L9.2 6.8H15.8L13.8 9.4Z" fill="#f4f4f4"/><path d="M13.8 9.4L15.8 6.8V13.4L13.8 16Z" fill="#cccccc"/><path d="M7.2 9.4H13.8V16H7.2Z" fill="#f0f0f2"/></g></svg>
<div class="abs" style="left:117.70px;top:202.17px;font-size:11.2px;line-height:1;font-weight:bold;color:#fff;white-space:nowrap;transform-origin:0 0;transform:scaleX(1.0054);">Simulation Model 1</div>
<svg class="abs" style="left:233px;top:200px" width="14" height="14" viewBox="0 0 14 14"><circle cx="7" cy="7" r="6.1" fill="#fff" stroke="#333" stroke-width="0.9"/><circle cx="7" cy="7" r="2.4" fill="#222"/></svg>
<div class="abs" style="left:77px;top:221.2px;width:110px;height:19.6px;background:rgba(240,240,240,0.93)"></div>
<svg class="abs" style="left:58px;top:224px" width="11" height="14" viewBox="0 0 11 14"><path d="M1.2 1.2L9.5 7L1.2 12.8Z" fill="#fff" stroke="#333" stroke-width="1.1"/></svg>
<svg class="abs" style="left:80px;top:224px" width="17" height="14" viewBox="0 0 17 14"><path d="M0.5 2H6.5L7.8 0.6H0.5Z" fill="#8e8e8e"/><rect x="0.5" y="2" width="16" height="11.5" fill="#999"/><rect x="0.5" y="2" width="16" height="1.2" fill="#b5b5b5"/></svg>
<div class="abs" style="left:110.00px;top:226.17px;font-size:11.2px;line-height:1;color:#2a2a2a;white-space:nowrap;transform-origin:0 0;transform:scaleX(0.9813);">Named Views</div>
<div class="abs" style="left:77px;top:245.2px;width:95px;height:19.6px;background:rgba(240,240,240,0.93)"></div>
<svg class="abs" style="left:58px;top:248px" width="11" height="14" viewBox="0 0 11 14"><path d="M1.2 1.2L9.5 7L1.2 12.8Z" fill="#fff" stroke="#333" stroke-width="1.1"/></svg>
<svg class="abs" style="left:80px;top:249px" width="16" height="12" viewBox="0 0 16 12"><path d="M0.7 6C3 2.5 5.5 1.6 8 1.6S13 2.5 15.3 6C13 9.5 10.5 10.4 8 10.4S3 9.5 0.7 6Z" fill="none" stroke="#a8a8a8" stroke-width="0.9"/><circle cx="8" cy="6" r="2.6" fill="none" stroke="#a8a8a8" stroke-width="0.9"/><path d="M2.5 1L13.5 11" stroke="#a8a8a8" stroke-width="0.9"/></svg>
<svg class="abs" style="left:105px;top:248px" width="17" height="14" viewBox="0 0 17 14"><path d="M0.5 2H6.5L7.8 0.6H0.5Z" fill="#8e8e8e"/><rect x="0.5" y="2" width="16" height="11.5" fill="#999"/><rect x="0.5" y="2" width="16" height="1.2" fill="#b5b5b5"/></svg>
<div class="abs" style="left:135.10px;top:250.17px;font-size:11.2px;line-height:1;color:#2a2a2a;white-space:nowrap;transform-origin:0 0;transform:scaleX(0.9372);">Origin</div>
<div class="abs" style="left:77px;top:269.2px;width:134px;height:19.6px;background:rgba(240,240,240,0.93)"></div>
<svg class="abs" style="left:58px;top:272px" width="11" height="14" viewBox="0 0 11 14"><path d="M1.2 1.2L9.5 7L1.2 12.8Z" fill="#fff" stroke="#333" stroke-width="1.1"/></svg>
<svg class="abs" style="left:80px;top:272px" width="17" height="14" viewBox="0 0 17 14"><path d="M0.5 2H6.5L7.8 0.6H0.5Z" fill="#8e8e8e"/><rect x="0.5" y="2" width="16" height="11.5" fill="#999"/><rect x="0.5" y="2" width="16" height="1.2" fill="#b5b5b5"/></svg>
<div class="abs" style="left:110.00px;top:274.17px;font-size:11.2px;line-height:1;color:#2a2a2a;white-space:nowrap;transform-origin:0 0;transform:scaleX(0.9349);">Model Components</div>
<div class="abs" style="left:77px;top:293.2px;width:187px;height:19.6px;background:rgba(240,240,240,0.93)"></div>
<svg class="abs" style="left:57.4px;top:296.6px" width="12.4" height="12.4" viewBox="0 0 12.4 12.4"><defs><linearGradient id="tg63303" x1="0.2" y1="0.2" x2="0.9" y2="0.9"><stop offset="0.3" stop-color="#d4d4d4"/><stop offset="1" stop-color="#5a5a5a"/></linearGradient></defs><path d="M11.4 1.4V11.4H1.4Z" fill="url(#tg63303)" stroke="#1c1c1c" stroke-width="1.2" stroke-linejoin="round"/></svg>
<div class="abs" style="left:79px;top:295.2px;width:185px;height:15.6px;background:#828282"></div>
<svg class="abs" style="left:80px;top:295px" width="16" height="16" viewBox="0 0 16 16"><circle cx="8" cy="8" r="7.3" fill="#5aab18" stroke="#3f7f10" stroke-width="0.8"/><path d="M4 8.2L7 11L12 5.5" stroke="#fff" stroke-width="1.9" fill="none"/></svg>
<svg class="abs" style="left:103px;top:294px" width="18" height="18" viewBox="0 0 18 18"><path d="M9 1V8M7.3 6.2L9 8.8L10.7 6.2Z" stroke="#333" stroke-width="1" fill="#333"/><path d="M1.5 10.2H16.5" stroke="#333" stroke-width="1.3"/><path d="M3 16.5L5.3 12.5L7.6 16.5ZM10.4 16.5L12.7 12.5L15 16.5Z" fill="#ccc" stroke="#444" stroke-width="0.9"/></svg>
<div class="abs" style="left:135.60px;top:298.17px;font-size:11.2px;line-height:1;font-weight:bold;color:#fff;white-space:nowrap;transform-origin:0 0;transform:scaleX(1.0054);">Study 1 - Static Stress</div>
<div class="abs" style="left:95px;top:317.2px;width:143px;height:19.6px;background:rgba(240,240,240,0.93)"></div>
<svg class="abs" style="left:98px;top:322px" width="16" height="10" viewBox="0 0 16 10"><path d="M0.5 5C3 1.3 5.5 0.5 8 0.5S13 1.3 15.5 5C13 8.7 10.5 9.5 8 9.5S3 8.7 0.5 5Z" fill="#9a9a9a"/><circle cx="8" cy="5" r="3.2" fill="#f0f0f0"/><circle cx="8" cy="5" r="1.9" fill="#8a8a8a"/></svg>
<svg class="abs" style="left:122px;top:318px" width="18" height="18" viewBox="0 0 18 18"><defs><clipPath id="mc131327"><circle cx="9" cy="9" r="7.6"/></clipPath></defs><circle cx="9" cy="9" r="7.6" fill="#fff"/><g clip-path="url(#mc131327)" fill="#555"><rect x="0.3" y="0.3" width="3.5" height="3.5"/><rect x="0.3" y="7.3" width="3.5" height="3.5"/><rect x="0.3" y="14.3" width="3.5" height="3.5"/><rect x="3.8" y="3.8" width="3.5" height="3.5"/><rect x="3.8" y="10.8" width="3.5" height="3.5"/><rect x="7.3" y="0.3" width="3.5" height="3.5"/><rect x="7.3" y="7.3" width="3.5" height="3.5"/><rect x="7.3" y="14.3" width="3.5" height="3.5"/><rect x="10.8" y="3.8" width="3.5" height="3.5"/><rect x="10.8" y="10.8" width="3.5" height="3.5"/><rect x="14.3" y="0.3" width="3.5" height="3.5"/><rect x="14.3" y="7.3" width="3.5" height="3.5"/><rect x="14.3" y="14.3" width="3.5" height="3.5"/></g><circle cx="9" cy="9" r="7.6" fill="none" stroke="#333" stroke-width="1.1"/></svg>
<div class="abs" style="left:153.00px;top:322.17px;font-size:11.2px;line-height:1;color:#2a2a2a;white-space:nowrap;transform-origin:0 0;transform:scaleX(0.9535);">Study Materials</div>
<div class="abs" style="left:95px;top:341.2px;width:152px;height:19.6px;background:rgba(240,240,240,0.93)"></div>
<svg class="abs" style="left:76px;top:344px" width="11" height="14" viewBox="0 0 11 14"><path d="M1.2 1.2L9.5 7L1.2 12.8Z" fill="#fff" stroke="#333" stroke-width="1.1"/></svg>
<svg class="abs" style="left:98px;top:346px" width="16" height="10" viewBox="0 0 16 10"><path d="M0.5 5C3 1.3 5.5 0.5 8 0.5S13 1.3 15.5 5C13 8.7 10.5 9.5 8 9.5S3 8.7 0.5 5Z" fill="#9a9a9a"/><circle cx="8" cy="5" r="3.2" fill="#f0f0f0"/><circle cx="8" cy="5" r="1.9" fill="#8a8a8a"/></svg>
<div class="abs" style="left:120px;top:343.2px;width:102px;height:15.6px;background:#828282"></div>
<svg class="abs" style="left:122px;top:342.8px" width="16" height="18" viewBox="0 0 16 18"><rect x="0.8" y="1" width="14.4" height="15.6" fill="#dfe3ee" stroke="#444" stroke-width="1.1"/><rect x="0.8" y="1" width="14.4" height="3" fill="#9a9a9a" stroke="#444" stroke-width="0.8"/><path d="M8 5.5V10M6.3 8.8L8 11L9.7 8.8Z" stroke="#2a55c0" stroke-width="1" fill="#2a55c0"/><path d="M3 12H13" stroke="#333" stroke-width="1.2"/><path d="M5.8 15.5L8 13L10.2 15.5Z" fill="#ccc" stroke="#444" stroke-width="0.7"/></svg>
<div class="abs" style="left:149.20px;top:346.17px;font-size:11.2px;line-height:1;font-weight:bold;color:#fff;white-space:nowrap;transform-origin:0 0;transform:scaleX(1.0069);">Load Case1</div>
<svg class="abs" style="left:225px;top:344px" width="14" height="14" viewBox="0 0 14 14"><circle cx="7" cy="7" r="6.1" fill="#fff" stroke="#333" stroke-width="0.9"/><circle cx="7" cy="7" r="2.4" fill="#222"/></svg>
<div class="abs" style="left:95px;top:365.2px;width:86px;height:19.6px;background:rgba(240,240,240,0.93)"></div>
<svg class="abs" style="left:97px;top:371px" width="16" height="8" viewBox="0 0 16 8"><rect x="0.8" y="1" width="14.4" height="5.6" fill="#fff" stroke="#1d3f94" stroke-width="1.3"/><rect x="8" y="1.6" width="6.6" height="4.4" fill="#9fb6e6"/><path d="M8 1V6.6" stroke="#1d3f94" stroke-width="1"/></svg>
<div class="abs" style="left:127.90px;top:370.17px;font-size:11.2px;line-height:1;color:#2a2a2a;white-space:nowrap;transform-origin:0 0;transform:scaleX(0.9729);">Contacts</div>
<div class="abs" style="left:95px;top:389.2px;width:95px;height:19.6px;background:rgba(240,240,240,0.93)"></div>
<svg class="abs" style="left:98px;top:393px" width="16" height="12" viewBox="0 0 16 12"><path d="M0.7 6C3 2.5 5.5 1.6 8 1.6S13 2.5 15.3 6C13 9.5 10.5 10.4 8 10.4S3 9.5 0.7 6Z" fill="none" stroke="#a8a8a8" stroke-width="0.9"/><circle cx="8" cy="6" r="2.6" fill="none" stroke="#a8a8a8" stroke-width="0.9"/><path d="M2.5 1L13.5 11" stroke="#a8a8a8" stroke-width="0.9"/></svg>
<svg class="abs" style="left:124px;top:392px" width="14" height="14" viewBox="0 0 14 14"><g fill="#d9bd60" stroke="#b09442" stroke-width="0.7"><rect x="0.5" y="0.5" width="6.5" height="6.5"/><rect x="0.5" y="7" width="6.5" height="6.5"/><rect x="7" y="7" width="6.5" height="6.5"/><path d="M0.5 0.5L7 7M0.5 7L7 13.5M7 7L13.5 13.5" fill="none"/></g></svg>
<div class="abs" style="left:152.80px;top:394.17px;font-size:11.2px;line-height:1;color:#2a2a2a;white-space:nowrap;transform-origin:0 0;transform:scaleX(0.9493);">Mesh</div>
<div class="abs" style="left:95px;top:413.2px;width:78px;height:19.6px;background:rgba(240,240,240,0.93)"></div>
<svg class="abs" style="left:101px;top:414px" width="10" height="18" viewBox="0 0 10 18"><defs><linearGradient id="rg106423" x1="0" y1="0" x2="0" y2="1"><stop offset="0" stop-color="#e01010"/><stop offset="0.3" stop-color="#f03010"/><stop offset="0.5" stop-color="#f8a020"/><stop offset="0.65" stop-color="#f0e020"/><stop offset="0.8" stop-color="#30d060"/><stop offset="1" stop-color="#20a0f0"/></linearGradient></defs><rect x="0.8" y="0.8" width="8.4" height="16.4" rx="1.5" fill="url(#rg106423)" stroke="#333" stroke-width="1.1"/></svg>
<div class="abs" style="left:127.90px;top:418.17px;font-size:11.2px;line-height:1;color:#2a2a2a;white-space:nowrap;transform-origin:0 0;transform:scaleX(0.9666);">Results</div>
<div class="abs" style="left:77px;top:437.2px;width:179px;height:19.6px;background:rgba(240,240,240,0.93)"></div>
<svg class="abs" style="left:57.4px;top:440.6px" width="12.4" height="12.4" viewBox="0 0 12.4 12.4"><defs><linearGradient id="tg63447" x1="0.2" y1="0.2" x2="0.9" y2="0.9"><stop offset="0.3" stop-color="#d4d4d4"/><stop offset="1" stop-color="#5a5a5a"/></linearGradient></defs><path d="M11.4 1.4V11.4H1.4Z" fill="url(#tg63447)" stroke="#1c1c1c" stroke-width="1.2" stroke-linejoin="round"/></svg>
<svg class="abs" style="left:80px;top:439px" width="16" height="16" viewBox="0 0 16 16"><circle cx="8" cy="8" r="7.3" fill="#5aab18" stroke="#3f7f10" stroke-width="0.8"/><path d="M4 8.2L7 11L12 5.5" stroke="#fff" stroke-width="1.9" fill="none"/></svg>
<svg class="abs" style="left:103px;top:438px" width="18" height="18" viewBox="0 0 18 18"><path d="M9 1V8M7.3 6.2L9 8.8L10.7 6.2Z" stroke="#333" stroke-width="1" fill="#333"/><path d="M1.5 10.2H16.5" stroke="#333" stroke-width="1.3"/><path d="M3 16.5L5.3 12.5L7.6 16.5ZM10.4 16.5L12.7 12.5L15 16.5Z" fill="#ccc" stroke="#444" stroke-width="0.9"/></svg>
<div class="abs" style="left:134.90px;top:442.17px;font-size:11.2px;line-height:1;color:#2a2a2a;white-space:nowrap;transform-origin:0 0;transform:scaleX(0.9829);">Study 2 - Static Stress</div>
<div class="abs" style="left:95px;top:461.2px;width:118px;height:19.6px;background:rgba(240,240,240,0.93)"></div>
<svg class="abs" style="left:76px;top:464px" width="11" height="14" viewBox="0 0 11 14"><path d="M1.2 1.2L9.5 7L1.2 12.8Z" fill="#fff" stroke="#333" stroke-width="1.1"/></svg>
<svg class="abs" style="left:97px;top:462px" width="18" height="18" viewBox="0 0 18 18"><defs><clipPath id="mc106471"><circle cx="9" cy="9" r="7.6"/></clipPath></defs><circle cx="9" cy="9" r="7.6" fill="#fff"/><g clip-path="url(#mc106471)" fill="#555"><rect x="0.3" y="0.3" width="3.5" height="3.5"/><rect x="0.3" y="7.3" width="3.5" height="3.5"/><rect x="0.3" y="14.3" width="3.5" height="3.5"/><rect x="3.8" y="3.8" width="3.5" height="3.5"/><rect x="3.8" y="10.8" width="3.5" height="3.5"/><rect x="7.3" y="0.3" width="3.5" height="3.5"/><rect x="7.3" y="7.3" width="3.5" height="3.5"/><rect x="7.3" y="14.3" width="3.5" height="3.5"/><rect x="10.8" y="3.8" width="3.5" height="3.5"/><rect x="10.8" y="10.8" width="3.5" height="3.5"/><rect x="14.3" y="0.3" width="3.5" height="3.5"/><rect x="14.3" y="7.3" width="3.5" height="3.5"/><rect x="14.3" y="14.3" width="3.5" height="3.5"/></g><circle cx="9" cy="9" r="7.6" fill="none" stroke="#333" stroke-width="1.1"/></svg>
<div class="abs" style="left:127.90px;top:466.17px;font-size:11.2px;line-height:1;color:#2a2a2a;white-space:nowrap;transform-origin:0 0;transform:scaleX(0.9600);">Study Materials</div>
<div class="abs" style="left:95px;top:485.2px;width:94px;height:19.6px;background:rgba(240,240,240,0.93)"></div>
<svg class="abs" style="left:76px;top:488px" width="11" height="14" viewBox="0 0 11 14"><path d="M1.2 1.2L9.5 7L1.2 12.8Z" fill="#fff" stroke="#333" stroke-width="1.1"/></svg>
<svg class="abs" style="left:97px;top:486.8px" width="16" height="18" viewBox="0 0 16 18"><rect x="0.8" y="1" width="14.4" height="15.6" fill="#dfe3ee" stroke="#444" stroke-width="1.1"/><rect x="0.8" y="1" width="14.4" height="3" fill="#9a9a9a" stroke="#444" stroke-width="0.8"/><path d="M8 5.5V10M6.3 8.8L8 11L9.7 8.8Z" stroke="#2a55c0" stroke-width="1" fill="#2a55c0"/><path d="M3 12H13" stroke="#333" stroke-width="1.2"/><path d="M5.8 15.5L8 13L10.2 15.5Z" fill="#ccc" stroke="#444" stroke-width="0.7"/></svg>
<div class="abs" style="left:123.90px;top:490.17px;font-size:11.2px;line-height:1;color:#2a2a2a;white-space:nowrap;transform-origin:0 0;transform:scaleX(0.9486);">Load Case1</div>
<div class="abs" style="left:95px;top:509.2px;width:86px;height:19.6px;background:rgba(240,240,240,0.93)"></div>
<svg class="abs" style="left:97px;top:515px" width="16" height="8" viewBox="0 0 16 8"><rect x="0.8" y="1" width="14.4" height="5.6" fill="#fff" stroke="#1d3f94" stroke-width="1.3"/><rect x="8" y="1.6" width="6.6" height="4.4" fill="#9fb6e6"/><path d="M8 1V6.6" stroke="#1d3f94" stroke-width="1"/></svg>
<div class="abs" style="left:127.90px;top:514.17px;font-size:11.2px;line-height:1;color:#2a2a2a;white-space:nowrap;transform-origin:0 0;transform:scaleX(0.9729);">Contacts</div>
<div class="abs" style="left:95px;top:533.2px;width:70px;height:19.6px;background:rgba(240,240,240,0.93)"></div>
<svg class="abs" style="left:98px;top:536px" width="14" height="14" viewBox="0 0 14 14"><g fill="#d9bd60" stroke="#b09442" stroke-width="0.7"><rect x="0.5" y="0.5" width="6.5" height="6.5"/><rect x="0.5" y="7" width="6.5" height="6.5"/><rect x="7" y="7" width="6.5" height="6.5"/><path d="M0.5 0.5L7 7M0.5 7L7 13.5M7 7L13.5 13.5" fill="none"/></g></svg>
<div class="abs" style="left:127.90px;top:538.17px;font-size:11.2px;line-height:1;color:#2a2a2a;white-space:nowrap;transform-origin:0 0;transform:scaleX(0.9457);">Mesh</div>
<div class="abs" style="left:95px;top:557.2px;width:103px;height:19.6px;background:#ffffa8"></div>
<div class="abs" style="left:95px;top:557.2px;width:25px;height:19.6px;background:#d0d0a0"></div>
<svg class="abs" style="left:97px;top:558px" width="18" height="17" viewBox="0 0 18 17"><path d="M9 1.2L17 15.8H1Z" fill="#ffd21e" stroke="#3a3000" stroke-width="1.1" stroke-linejoin="round"/><path d="M9 6V11" stroke="#111" stroke-width="1.8"/><circle cx="9" cy="13.4" r="1.1" fill="#111"/></svg>
<svg class="abs" style="left:126px;top:558px" width="10" height="18" viewBox="0 0 10 18"><defs><linearGradient id="rg131567" x1="0" y1="0" x2="0" y2="1"><stop offset="0" stop-color="#e01010"/><stop offset="0.3" stop-color="#f03010"/><stop offset="0.5" stop-color="#f8a020"/><stop offset="0.65" stop-color="#f0e020"/><stop offset="0.8" stop-color="#30d060"/><stop offset="1" stop-color="#20a0f0"/></linearGradient></defs><rect x="0.8" y="0.8" width="8.4" height="16.4" rx="1.5" fill="url(#rg131567)" stroke="#333" stroke-width="1.1"/></svg>
<div class="abs" style="left:153.00px;top:562.17px;font-size:11.2px;line-height:1;color:#2a2a2a;white-space:nowrap;transform-origin:0 0;transform:scaleX(0.9613);">Results</div>
<div class="abs" style="left:5px;top:982px;width:299px;height:23px;background:#f0f0f0;border:1px solid #c9c9c9;border-bottom:none"></div>
<div class="abs" style="left:30.20px;top:989.54px;font-size:10.7px;line-height:1;color:#5a5550;white-space:nowrap;transform-origin:0 0;transform:scaleX(0.9021);">COMMENTS</div>
<svg class="abs" style="left:284px;top:989px" width="9" height="9" viewBox="0 0 9 9"><circle cx="4.5" cy="4.5" r="4.5" fill="#222"/><rect x="2" y="3.8" width="5" height="1.4" fill="#fff"/><rect x="3.8" y="2" width="1.4" height="5" fill="#fff"/></svg>
<div class="abs" style="left:1258px;top:644px;width:31px;height:22px;background:#0696d7"></div>
<svg class="abs" style="left:1263px;top:647px" width="20" height="17" viewBox="0 0 20 17"><path d="M3.5 2L9.5 8L16.5 1M3.5 8L9.5 14L16.5 7" stroke="#fff" stroke-width="1.8" fill="none"/></svg>
<div class="abs lg" style="left:1289px;top:644px;width:71px;height:22px"><span class="tarr" style="position:absolute;left:61px;top:9px;margin:0"></span></div>
<div class="abs lg" style="left:1258px;top:674px;width:101px;height:22px"><span class="tarr" style="position:absolute;left:89px;top:9px;margin:0"></span></div>
<div class="abs lg" style="left:1258px;top:704px;width:76px;height:22px"><span class="tarr" style="position:absolute;left:64px;top:9px;margin:0"></span></div>
<div class="abs lg" style="left:1258px;top:734px;width:36px;height:22px"><span class="tarr" style="position:absolute;left:25px;top:9px;margin:0"></span></div>
<div class="abs lg" style="left:1258px;top:764px;width:62px;height:22px"></div>
<div class="abs" style="left:1291.00px;top:649.42px;font-size:11.2px;line-height:1;color:#2a2a2a;white-space:nowrap;transform-origin:0 0;transform:scaleX(0.9536);">Load Case1</div>
<div class="abs" style="left:1260.00px;top:679.22px;font-size:11.2px;line-height:1;color:#2a2a2a;white-space:nowrap;transform-origin:0 0;transform:scaleX(0.9893);">Stress</div>
<div class="abs" style="left:1260.00px;top:709.42px;font-size:11.2px;line-height:1;color:#2a2a2a;white-space:nowrap;transform-origin:0 0;transform:scaleX(0.9677);">Von Mises</div>
<div class="abs" style="left:1260.00px;top:739.62px;font-size:11.2px;line-height:1;color:#2a2a2a;white-space:nowrap;transform-origin:0 0;transform:scaleX(0.8641);">MPa</div>
<svg class="abs" style="left:1263px;top:766px" width="18" height="18" viewBox="-9 -9 18 18"><rect x="-1.7" y="-8.2" width="3.4" height="4" fill="#444" transform="rotate(0)"/><rect x="-1.7" y="-8.2" width="3.4" height="4" fill="#444" transform="rotate(45)"/><rect x="-1.7" y="-8.2" width="3.4" height="4" fill="#444" transform="rotate(90)"/><rect x="-1.7" y="-8.2" width="3.4" height="4" fill="#444" transform="rotate(135)"/><rect x="-1.7" y="-8.2" width="3.4" height="4" fill="#444" transform="rotate(180)"/><rect x="-1.7" y="-8.2" width="3.4" height="4" fill="#444" transform="rotate(225)"/><rect x="-1.7" y="-8.2" width="3.4" height="4" fill="#444" transform="rotate(270)"/><rect x="-1.7" y="-8.2" width="3.4" height="4" fill="#444" transform="rotate(315)"/><circle r="5.6" fill="#444"/><circle r="3.2" fill="#f0f0f0"/><circle r="1.9" fill="none" stroke="#444" stroke-width="0"/></svg>
<svg class="abs" style="left:1297px;top:769px" width="13" height="13" viewBox="0 0 13 13"><defs><linearGradient id="ltg" x1="0" y1="0" x2="1" y2="1"><stop offset="0.3" stop-color="#c8c8c8"/><stop offset="1" stop-color="#666"/></linearGradient></defs><path d="M11.5 1.5V11.5H1.5Z" fill="url(#ltg)" stroke="#333" stroke-width="1"/></svg>
<svg class="abs" style="left:1355px;top:630px" width="160" height="262" viewBox="1355 630 160 262"><defs><linearGradient id="cb" x1="0" y1="0" x2="0" y2="1"><stop offset="0" stop-color="#ff0000"/><stop offset="0.025" stop-color="#ff1000"/><stop offset="0.19" stop-color="#ffee00"/><stop offset="0.225" stop-color="#ffff00"/><stop offset="0.27" stop-color="#e6ff00"/><stop offset="0.46" stop-color="#14e600"/><stop offset="0.5" stop-color="#00e000"/><stop offset="0.53" stop-color="#00e614"/><stop offset="0.69" stop-color="#00ffee"/><stop offset="0.75" stop-color="#00ffff"/><stop offset="0.81" stop-color="#00e6ff"/><stop offset="0.985" stop-color="#0008ff"/><stop offset="1" stop-color="#0000ff"/></linearGradient><linearGradient id="cbs" x1="0" y1="0" x2="1" y2="0"><stop offset="0" stop-color="#000" stop-opacity="0"/><stop offset="1" stop-color="#000" stop-opacity="0.28"/></linearGradient></defs><filter id="cbblur" x="-100%" y="-10%" width="300%" height="120%"><feGaussianBlur stdDeviation="2.2"/></filter><rect x="1365.5" y="640" width="18" height="241" fill="#000" opacity="0.55" filter="url(#cbblur)"/><rect x="1368" y="641" width="20" height="240" fill="url(#cb)"/><rect x="1388" y="879.85" width="9.5" height="1.5" fill="#666"/><rect x="1388" y="855.37" width="5.5" height="1.5" fill="#666"/><rect x="1388" y="830.89" width="9.5" height="1.5" fill="#666"/><rect x="1388" y="806.40" width="5.5" height="1.5" fill="#666"/><rect x="1388" y="781.92" width="9.5" height="1.5" fill="#666"/><rect x="1388" y="757.44" width="5.5" height="1.5" fill="#666"/><rect x="1388" y="732.96" width="9.5" height="1.5" fill="#666"/><rect x="1388" y="708.47" width="5.5" height="1.5" fill="#666"/><rect x="1388" y="683.99" width="9.5" height="1.5" fill="#666"/><rect x="1388" y="659.51" width="5.5" height="1.5" fill="#666"/><rect x="1388" y="640.3" width="9.5" height="1.5" fill="#666"/></svg>
<div class="abs" style="left:1417.60px;top:635.14px;font-size:12px;line-height:1;color:#000;white-space:nowrap;transform-origin:0 0;transform:scaleX(1.0001);">7.34 Max.</div>
<div class="abs" style="left:1417.60px;top:678.74px;font-size:12px;line-height:1;color:#000;white-space:nowrap;transform-origin:0 0;transform:scaleX(1.0488);">6</div>
<div class="abs" style="left:1417.60px;top:727.64px;font-size:12px;line-height:1;color:#000;white-space:nowrap;transform-origin:0 0;transform:scaleX(1.0550);">4.5</div>
<div class="abs" style="left:1417.60px;top:776.64px;font-size:12px;line-height:1;color:#000;white-space:nowrap;transform-origin:0 0;transform:scaleX(1.0488);">3</div>
<div class="abs" style="left:1417.60px;top:825.54px;font-size:12px;line-height:1;color:#000;white-space:nowrap;transform-origin:0 0;transform:scaleX(0.9771);">1.5</div>
<div class="abs" style="left:1417.60px;top:874.74px;font-size:12px;line-height:1;color:#000;white-space:nowrap;transform-origin:0 0;transform:scaleX(0.9976);">0 Min.</div>
<svg class="abs" style="left:1400px;top:118px" width="120" height="120" viewBox="1400 118 120 120"><defs><filter id="vcb" x="-50%" y="-50%" width="200%" height="200%"><feGaussianBlur stdDeviation="4"/></filter><linearGradient id="vcr" x1="0" y1="0" x2="1" y2="1"><stop offset="0" stop-color="#ececec"/><stop offset="1" stop-color="#dcdcdc"/></linearGradient></defs><polygon points="1432,208 1472,222 1492,198 1480,210" fill="#000" opacity="0.22" filter="url(#vcb)"/><polygon points="1446,145 1488.3,152.4 1471.5,172.7 1423.4,162.4" fill="#eeeeee"/><polygon points="1423.4,162.4 1471.5,172.7 1469.7,216.3 1426.6,204.2" fill="url(#vcr)"/><polygon points="1471.5,172.7 1488.3,152.4 1486.1,192.8 1469.7,216.3" fill="#d6d6d6"/><polygon points="1462.5,170.8 1466,166.5 1474.8,168.4 1474.6,177 1471,181.2 1462.3,179.2" fill="#dfe3ec" opacity="0.9"/><path d="M1446 145L1488.3 152.4L1471.5 172.7L1423.4 162.4ZM1471.5 172.7L1469.7 216.3M1423.4 162.4L1426.6 204.2M1488.3 152.4L1486.1 192.8" stroke="#9a9a9a" stroke-width="0.8" fill="none" stroke-dasharray="6 3"/><path d="M1426.6 204.2L1469.7 216.3L1486.1 192.8" stroke="#9a9a9a" stroke-width="0.8" fill="none" stroke-dasharray="6 3"/><text transform="matrix(0.84,0.2,-0.05,1,1432.8,190.3)" font-family="Liberation Sans, sans-serif" font-size="11.5" font-weight="bold" fill="#a2a6b0" letter-spacing="0.2">RIGHT</text><text transform="matrix(0.55,-0.62,0.9,0.3,1452,162)" font-family="Liberation Sans, sans-serif" font-size="7" fill="#a8acb4">TOP</text><text transform="matrix(0.4,-0.6,0.05,1,1476,194)" font-family="Liberation Sans, sans-serif" font-size="7" fill="#a8acb4">BACK</text><path d="M1446.3 138.5L1447.5 145.5" stroke="#6a6af8" stroke-width="2"/><path d="M1426.8 204.2L1422.8 208.8" stroke="#f26a6a" stroke-width="2"/><path d="M1486.3 192.4L1493.5 193.8" stroke="#6ae878" stroke-width="2"/><text x="1441.5" y="136.6" font-family="Liberation Sans, sans-serif" font-size="14" fill="#6a6af8">Z</text><text x="1413" y="218" font-family="Liberation Sans, sans-serif" font-size="13" fill="#f26a6a">X</text><text x="1494.5" y="200" font-family="Liberation Sans, sans-serif" font-size="13" fill="#6ae878">Y</text></svg>
<div class="abs" style="left:658px;top:982px;width:205px;height:23px;background:#f0f0f0"></div>
<svg class="abs" style="left:658px;top:982px" width="205" height="23" viewBox="0 0 205 23"><path d="M12 2.2V19" stroke="#333" stroke-width="1.6" fill="none"/><path d="M9.6 5L12 1.5L14.4 5Z" fill="#fff" stroke="#333" stroke-width="0.8"/><path d="M17.5 9.5C20.5 12 17 15.3 12 15.3C7 15.3 3.5 12.5 6.5 10" stroke="#333" stroke-width="1.3" fill="none"/><path d="M4.5 12.8L8.6 9.2L8.8 14Z" fill="#222"/><path d="M24.5 10L31 10L27.7 14Z" fill="#222"/><rect x="36.8" y="8" width="15" height="10" fill="#eee" stroke="#333" stroke-width="1.1"/><rect x="39.5" y="11" width="9.5" height="4.5" fill="#9a9aa6" stroke="#333" stroke-width="0.9"/><path d="M37.5 8L41.5 4.5L44 6.5L47.5 4L50 5V8" fill="#bbb" stroke="#333" stroke-width="0.8"/><path d="M66 19.5C63 17.5 62.5 14 60.8 12.2C62 11 63.7 12.3 64.6 13.7V6.2C64.6 4.8 66.4 4.8 66.5 6.2V4.6C66.6 3.2 68.5 3.2 68.6 4.6V5.2C68.7 3.9 70.5 3.9 70.6 5.3V6.8C70.8 5.6 72.5 5.7 72.6 7.2V13C72.6 16 72 18 70.8 19.5Z" fill="#fff" stroke="#333" stroke-width="1"/><path d="M66.5 6.2V11M68.6 5.2V11M70.6 6.8V11.3" stroke="#333" stroke-width="0.8"/><circle cx="92.5" cy="11" r="5.2" fill="#d9ecf2" stroke="#444" stroke-width="1.2"/><path d="M96.3 14.8L100.6 19" stroke="#333" stroke-width="2.6"/><path d="M101 6.8H106M103.5 4.3V9.3M101 11.3H106" stroke="#222" stroke-width="1.1"/><rect x="115" y="4" width="15.5" height="15.5" fill="none" stroke="#333" stroke-width="0.9" stroke-dasharray="2.2 1.5"/><circle cx="121.8" cy="10.2" r="6.2" fill="#d9ecf2" stroke="#444" stroke-width="1.3"/><path d="M126.3 14.8L130.3 18.8" stroke="#333" stroke-width="2.8"/><path d="M135.5 10L142 10L138.7 14Z" fill="#222"/><rect x="148.5" y="4.5" width="14.5" height="11" rx="1" fill="#8fb2de" stroke="#333" stroke-width="1.4"/><rect x="153.5" y="15.5" width="4.5" height="2.2" fill="#555"/><rect x="151" y="17.5" width="9.5" height="1.8" fill="#ddd" stroke="#555" stroke-width="0.6"/><path d="M165.5 10L172 10L168.7 14Z" fill="#222"/><rect x="179" y="4" width="15" height="15" fill="#8c8c96" stroke="#333" stroke-width="1"/><path d="M182.75 4V19M186.5 4V19M190.25 4V19M179 7.75H194M179 11.5H194M179 15.25H194" stroke="#e8e8e8" stroke-width="0.8"/><path d="M196.5 10L203 10L199.7 14Z" fill="#222"/></svg>
</body></html>
